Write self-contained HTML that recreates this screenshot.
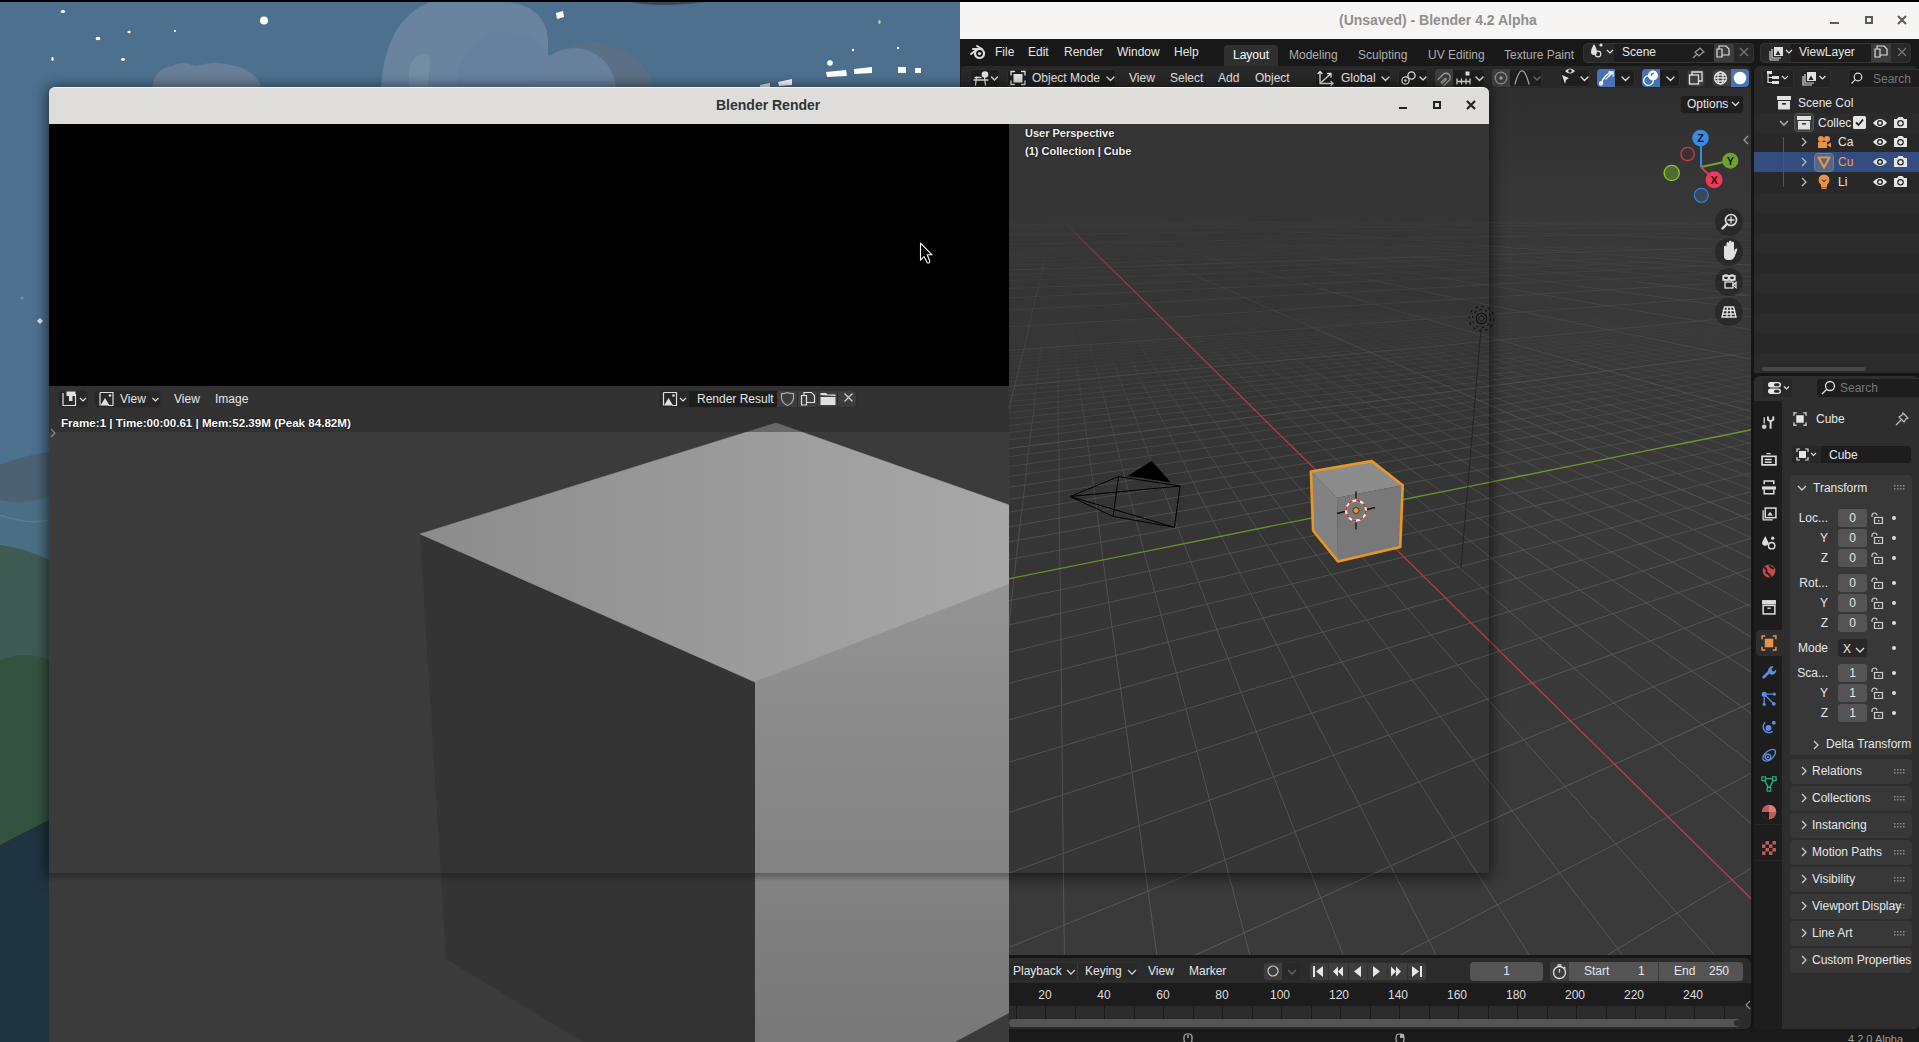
<!DOCTYPE html>
<html><head><meta charset="utf-8">
<style>
*{margin:0;padding:0;box-sizing:border-box}
html,body{width:1919px;height:1042px;overflow:hidden;background:#000;font-family:"Liberation Sans",sans-serif}
.a{position:absolute}
.hb{background:#1e1e1e;border:1px solid #2e2e2e;border-radius:4px}
.t{position:absolute;white-space:nowrap;color:#e6e6e6;font-size:12px;line-height:14px}
</style></head><body>
<!-- desktop wallpaper -->
<svg class="a" style="left:0;top:2px" width="960" height="1040" viewBox="0 2 960 1040">
  <rect x="0" y="2" width="960" height="1040" fill="#4d708f"/>
  <!-- clouds -->
  <path d="M548 88V40Q546 5 505 2H430Q385 20 381 88Z" fill="#6a84a0"/>
  <circle cx="507" cy="82" r="50" fill="#6780a0" opacity=".9"/>
  <path d="M546 88Q552 45 590 42Q640 45 655 88Z" fill="#5b7086"/>
  <circle cx="574" cy="90" r="42" fill="#67809c"/>
  <path d="M410 88Q405 60 420 55Q428 52 430 60L428 88Z" fill="#7b92a8" opacity=".6"/>
  <path d="M152 88Q155 68 172 66Q182 60 195 66Q215 60 235 66Q255 70 262 88Z" fill="#697f98"/>
  <path d="M630 2Q660 8 705 2Z" fill="#38495a"/>
  <!-- stars -->
  <g fill="#fff">
    <ellipse cx="63" cy="11.5" rx="2.2" ry="1.6"/><ellipse cx="98" cy="38.5" rx="2.3" ry="1.7"/><ellipse cx="129" cy="32" rx="1.6" ry="1.2"/>
    <circle cx="175" cy="31" r="1.1"/><circle cx="264" cy="20.5" r="4"/><ellipse cx="52.5" cy="59" rx="1.2" ry="2"/><ellipse cx="123" cy="59.5" rx="2" ry="1.4"/>
    <path d="M556 13L563 11L564 17L557 19Z"/><circle cx="853" cy="50" r="1.2"/><circle cx="898" cy="48" r="1.2"/>
    <path d="M826 72L846 70L847 76L827 77Z"/><path d="M854 69L872 67L872 73L854 74Z"/><path d="M898 67L906 67L906 73L898 73Z"/><path d="M915 68L921 68L921 73L915 73Z"/>
    <path d="M760 85L770 83L770 88L760 88Z" opacity=".8"/><path d="M778 82L792 79L792 85L779 86Z"/>
    <circle cx="830" cy="63" r="2.8"/>
  </g>
  <ellipse cx="879.5" cy="22" rx="1.2" ry="2" fill="#e6d060"/>
  <path d="M40 318L43 321L40 324L37 321Z" fill="#dfe6ee"/><circle cx="22" cy="298" r="1.5" fill="#7890a8"/>
  <!-- left strip landscape -->
  <path d="M0 465Q25 455 49 452V1042H0Z" fill="#4c6273"/>
  <path d="M0 500Q20 505 49 497V1042H0Z" fill="#4a6f84"/>
  <path d="M0 515Q25 525 49 520" fill="none" stroke="#5a7c8e" stroke-width="1.5"/>
  <path d="M0 545Q25 548 49 560V1042H0Z" fill="#3e5b54"/>
  <path d="M0 660Q25 650 49 660V1042H0Z" fill="#34533f"/>
  <path d="M0 845Q25 832 49 820V1042H0Z" fill="#1f3340"/>
  <!-- shadow of render window -->
  <defs><linearGradient id="shtop" x1="0" y1="0" x2="0" y2="1"><stop offset="0" stop-color="#000" stop-opacity="0"/><stop offset="1" stop-color="#000" stop-opacity=".35"/></linearGradient>
  <linearGradient id="shleft" x1="0" y1="0" x2="1" y2="0"><stop offset="0" stop-color="#000" stop-opacity="0"/><stop offset="1" stop-color="#000" stop-opacity=".35"/></linearGradient></defs>
</svg>
<!-- main blender window -->
<div class="a" id="main" style="left:960px;top:2px;width:959px;height:1040px;background:#161616">
  <div class="a" style="left:0;top:0;width:959px;height:37px;background:#f6f5f4"></div>
  <div class="a" style="left:0;top:37px;width:959px;height:27px;background:#181818"></div>
  <div class="a" style="left:0;top:64px;width:791px;height:22px;background:#1d1d1d"></div>

  <!-- viewport -->
  <div class="a" style="left:1px;top:86px;width:790px;height:867px;background:linear-gradient(#2f2f2f 0,#373737 110px,#393939 400px,#3a3a3a)"></div>
  <div class="a" style="left:49px;top:122px;width:480px;height:749px;background:#383838"></div>
  <svg class="a" id="grid" style="left:1px;top:86px" width="790" height="867" viewBox="961 88 790 867"><g id="gridg"><path d="M947 224L988 223L1027 223L1065 223L1101 223L1135 223L1169 222L1201 222L1231 222L1261 222L1289 222L1317 222L1343 222M929 225L977 225L1023 225L1066 224L1108 224L1148 224L1186 224L1222 224L1256 223L1290 223L1321 223L1352 223L1381 223L1409 222L1436 222L1462 222L1487 222L1512 222M961 227L1016 227L1068 226L1118 226L1164 226L1208 225L1250 225L1290 225L1328 225L1364 224L1398 224L1431 224L1462 224L1492 223L1520 223L1548 223L1574 223L1599 223L1623 223L1647 222M936 230L1006 230L1071 229L1132 229L1188 228L1241 228L1290 227L1337 227L1381 227L1422 226L1461 226L1498 226L1533 225L1566 225L1597 225L1627 224L1656 224L1683 224L1709 224L1734 224L1757 223M1226 232L1291 232L1352 231L1408 230L1460 230L1508 229L1553 229L1594 228L1634 228L1671 227L1705 227L1738 226L1768 226M1646 234L1698 233L1745 232L1789 231M1160 222L1164 222L1169 222L1174 223L1179 223L1186 224L1192 224L1200 225L1208 225L1218 226L1229 227L1241 228L1255 229L1272 230L1291 232M1253 222L1261 222L1270 222L1279 223L1290 223L1301 224L1314 224L1328 225L1343 225L1361 226L1381 227L1403 227L1429 228L1460 230L1495 231L1538 233M1343 222L1355 222L1367 222L1381 223L1396 223L1412 223L1431 224L1451 224L1473 225L1498 226L1526 226L1558 227L1594 228L1637 229L1686 230L1745 232L1816 234M1446 222L1462 222L1480 222L1499 223L1520 223L1543 224L1569 224L1597 225L1629 225L1665 226L1705 227L1751 228M1555 222L1576 222L1599 223L1624 223L1652 224L1683 224L1717 225L1755 225M1696 223L1725 223L1757 223" stroke="#606060" stroke-width="1" stroke-opacity="0.10" fill="none"/><path d="M895 236L990 235L1076 234L1154 233L1226 232M958 245L1085 243L1196 241L1293 239L1380 238L1457 237L1526 236L1589 235L1646 234M867 274L1109 267L1298 261L1450 256L1574 252L1677 249L1765 247M1291 232L1315 233L1344 235L1380 238L1426 241L1488 246L1574 252L1703 262L1919 278M1538 233L1589 235L1653 237L1734 240L1841 244" stroke="#606060" stroke-width="1" stroke-opacity="0.20" fill="none"/><path d="M1026 249L1090 247M952 252L1024 251L1092 249L1154 248L1212 247L1266 246L1317 245M945 254L1023 253L1094 251L1159 250L1220 249L1277 247L1330 246L1379 245M938 257L1020 255L1096 254L1166 252L1230 251L1289 249L1344 248L1396 247L1444 246M929 260L1018 258L1099 256L1172 254L1240 253L1303 251L1360 250L1414 248L1464 247L1510 246M919 264L1015 261L1102 259L1180 257L1252 255L1318 253L1378 252L1434 250L1486 249L1534 248L1579 247M1266 258L1335 256L1399 254L1457 253L1511 251L1561 250L1607 248L1650 247M1422 257L1483 255L1539 253L1591 252L1638 250L1682 249M1512 258L1571 256L1624 254L1673 253L1719 251L1760 250M1607 259L1662 257L1713 255L1759 253M1649 262L1706 260L1758 258M1002 250L997 253L992 257L984 262M1048 249L1047 252L1046 256L1045 261M1132 247L1138 250L1146 254L1155 258M1171 247L1180 249L1191 253L1205 256M1208 246L1220 249L1235 252L1252 255L1273 260M1244 245L1259 248L1276 251L1297 254L1322 258M1278 245L1295 247L1315 250L1339 253L1367 257M1311 244L1330 246L1352 249L1378 252L1410 256M1363 245L1387 248L1416 251L1450 254L1492 259M1395 245L1421 247L1452 250L1489 253L1532 257M1425 244L1453 246L1486 249L1525 252L1571 256L1627 261M1484 246L1518 248L1559 251L1607 255L1665 259L1737 264M1513 245L1549 247L1591 250L1641 254L1701 258L1775 263M1579 247L1622 249L1673 253L1735 256L1810 261M1651 249L1704 252L1766 255M1679 248L1733 251L1796 254" stroke="#606060" stroke-width="1" stroke-opacity="0.10" fill="none"/><path d="M908 268L1012 265L1105 263L1189 260L1266 258M894 273L1008 270L1109 267L1200 264L1281 261L1355 259L1422 257M877 279L1003 275L1114 271L1212 268L1299 265L1378 262L1448 260L1512 258M857 286L998 281L1120 277L1226 273L1320 269L1404 266L1479 264L1546 261L1607 259M832 296L991 289M1127 284L1244 279L1345 275L1435 271L1514 268L1585 265L1649 262M1376 281L1472 277L1557 273L1631 269L1697 266L1756 264M1518 283L1607 279L1686 275L1754 271M1669 286L1752 281M1747 295L1833 289M984 262L975 268L963 276L947 287M1045 261L1043 266L1042 274L1039 283M1155 258L1166 263L1180 269L1199 277M1205 256L1221 261L1242 267L1268 274L1304 284M1273 260L1299 265L1332 272L1376 281M1322 258L1352 263L1391 270L1442 278M1367 257L1402 262L1445 268L1502 275L1577 286M1410 256L1448 260L1496 266L1557 273L1637 282M1492 259L1543 264L1607 270L1691 279L1806 291M1532 257L1586 262L1654 268L1741 276L1858 287M1627 261L1697 266L1787 274M1737 264L1829 271" stroke="#606060" stroke-width="1" stroke-opacity="0.20" fill="none"/><path d="M991 289L1127 284M799 308L982 299L1135 292L1265 286L1376 281M754 324L971 312L1146 303L1291 295L1413 289L1518 283M955 330L1161 318L1326 307L1461 299L1574 292L1669 286M933 356L1181 338L1372 323L1523 312L1646 303L1747 295M1438 346L1608 330L1741 317L1848 307M1730 355L1873 337M1039 283L1036 297L1031 317L1024 349M1199 277L1224 288L1259 304L1314 328M1304 284L1353 298L1426 319L1548 354M1376 281L1436 294L1523 312L1663 341M1442 278L1510 289L1608 306L1759 331M1577 286L1682 300L1841 322M1637 282L1747 295L1910 314" stroke="#606060" stroke-width="1" stroke-opacity="0.30" fill="none"/><path d="M897 397L1211 367L1438 346M833 471L1261 416L1537 380L1730 355M1024 349L1008 413L966 587L308 3326M-98 1543L1615 764L2062 561M1314 328L1408 369L1610 458L2360 789M1548 354L1789 422M1663 341L1923 395" stroke="#606060" stroke-width="1" stroke-opacity="0.40" fill="none"/><path d="M1000 327L1043 325L1084 322L1123 320M953 332L999 330L1043 327L1085 324L1125 322L1163 319L1199 317L1234 315M951 335L998 332L1043 329L1085 326L1126 323L1164 321L1201 319L1237 316L1271 314M949 337L997 334L1043 331L1086 328L1127 325L1166 323L1204 320L1240 318L1274 316L1307 314M947 339L996 336L1042 333L1086 330L1128 327L1168 325L1206 322L1243 320L1277 317L1311 315L1343 313M945 342L995 339L1042 335L1087 332L1130 329L1170 327L1209 324L1246 321L1281 319L1315 317L1347 315L1378 313M943 345L994 341L1042 338L1088 335L1131 332L1172 329L1212 326L1249 323L1285 321L1319 318L1352 316L1383 314M940 347L992 344L1042 340L1088 337L1132 334L1174 331L1214 328L1252 325L1289 323L1324 320L1357 318L1388 316L1419 314M938 350L991 346L1041 343L1089 339L1134 336L1177 333L1217 330L1256 327L1293 325L1328 322L1362 320L1394 317L1425 315M935 353L990 349L1041 345L1089 342L1135 338L1179 335L1220 332L1260 329L1297 327L1333 324L1367 321L1399 319L1430 317L1460 315M933 356L988 352M1181 338L1223 334L1263 331L1301 329L1338 326L1372 323L1405 321L1437 318L1467 316M1267 334L1306 331L1343 328L1378 325L1411 323L1443 320L1473 318L1503 316M1311 333L1348 330L1383 327L1417 324L1450 322L1480 319L1510 317M1353 332L1389 329L1424 326L1456 324L1488 321L1517 319L1546 317M1359 334L1395 331L1430 328L1463 326L1495 323L1525 321L1554 318M1402 333L1437 330L1471 328L1503 325L1533 322L1562 320M1444 333L1478 330L1510 327L1541 324L1571 322L1599 319M1451 335L1486 332L1519 329L1550 326L1580 324L1608 321M1494 334L1527 331L1559 328L1589 326L1617 323M1502 336L1536 333L1568 330L1598 328L1627 325L1655 322M1511 339L1545 336L1577 333L1608 330L1637 327L1665 324M1555 338L1587 335L1618 332L1648 329L1676 326M1565 340L1598 337L1629 334L1659 331L1687 328M1608 340L1640 336L1670 333L1698 330L1726 327M1619 342L1651 339L1682 335L1710 332L1738 329M1631 345L1663 341L1694 338L1723 335L1750 332M1643 347L1676 344L1706 340L1736 337L1763 334M969 331L964 338L958 346M1688 346L1720 343L1749 339L1777 336M984 330L980 337L975 345L970 353M1702 349L1733 345L1763 342M999 330L996 336L992 344L988 352M1716 352L1748 348L1777 344M1014 329L1012 335L1009 342L1006 351M1730 355L1762 351M1029 328L1027 334L1025 341L1024 349M1043 327L1042 333L1042 340L1041 348M1057 326L1057 332L1057 339L1057 347M1071 325L1072 331L1073 338L1074 346M1085 324L1086 330L1088 337L1090 344M1098 323L1101 329L1103 336L1106 343M1112 322L1115 328L1118 335L1122 342M1125 322L1128 327L1132 334L1137 341M1138 321L1142 326L1147 333L1152 340M1150 320L1155 326L1161 332L1167 339M1175 318L1181 324L1188 330L1196 336M1187 318L1194 323L1201 329L1210 335M1199 317L1206 322L1214 328L1223 334M1211 316L1219 321L1227 327L1237 333M1222 315L1231 321L1240 326L1250 332M1234 315L1243 320L1252 325L1263 331M1245 314L1254 319L1265 324L1276 330L1289 337M1256 313L1266 318L1277 324L1289 329L1302 336M1267 313L1277 317L1289 323L1301 329L1315 335M1278 312L1289 317L1301 322L1314 328L1328 334M1300 316L1312 321L1326 327L1341 333M1311 315L1324 320L1338 326L1353 332M1322 314L1335 319L1349 325L1365 331M1332 314L1346 319L1361 324L1377 330M1343 313L1357 318L1372 323L1389 329L1408 336M1353 312L1367 317L1383 322L1401 328L1421 335M1363 312L1378 316L1394 322L1412 327L1432 334M1388 316L1405 321L1424 326L1444 333M1399 315L1416 320L1435 326L1456 332M1409 314L1426 319L1446 325L1467 331L1491 337M1419 314L1437 318L1456 324L1478 330L1502 336M1429 313L1447 318L1467 323L1489 329L1514 335M1438 312L1457 317L1477 322L1500 328L1525 334L1553 342M1467 316L1488 321L1510 327L1536 333L1565 340M1477 315L1498 320L1521 326L1547 332L1576 339M1486 315L1508 320L1531 325L1557 331L1587 338M1496 314L1517 319L1541 324L1568 330L1598 337L1631 345M1527 318L1551 323L1578 329L1608 336L1642 343M1536 317L1561 323L1588 328L1619 335L1653 342L1691 351M1546 317L1571 322L1598 328L1629 334L1663 341L1702 349M1580 321L1608 327L1639 333L1674 340L1713 348L1757 357M1590 320L1618 326L1649 332L1684 339L1723 347L1767 356M1599 319L1627 325L1659 331L1694 338L1733 345L1778 354M1637 324L1668 330L1704 337L1743 344L1788 353M1646 323L1678 329L1713 336L1753 343M1655 322L1687 328L1723 335L1763 342M1696 327L1732 334L1772 341M1705 326L1741 333L1782 340M1750 332L1791 338" stroke="#575757" stroke-width="1" stroke-opacity="0.10" fill="none"/><path d="M988 352L1041 348L1090 344L1137 341L1181 338M930 359L987 355L1040 351L1091 347L1139 343L1184 340L1227 337L1267 334M927 363L985 358L1040 354L1092 350L1140 346L1186 343L1230 339L1271 336L1311 333M924 366L984 362L1040 357L1092 353L1142 349L1189 345L1233 342L1275 338L1315 335L1353 332M921 370L982 365L1039 360L1093 356L1144 352L1192 348L1237 344L1280 341L1320 337L1359 334M917 374L980 369L1039 364L1094 359L1146 355L1195 351L1241 347L1284 343L1326 340L1365 337L1402 333M914 378L978 373L1038 367L1095 363L1148 358L1198 354L1245 350L1289 346L1331 342L1371 339L1408 336L1444 333M1249 353L1294 349L1337 345L1377 341L1415 338L1451 335M1299 352L1343 348L1384 344L1422 341L1459 337L1494 334M1349 351L1390 347L1430 343L1467 340L1502 336M1355 354L1398 350L1438 346L1475 342L1511 339M1405 353L1446 349L1484 345L1520 341L1555 338M1454 351L1493 348L1530 344L1565 340M1463 354L1502 350L1540 347L1575 343L1608 340M1512 353L1550 349L1586 346L1619 342M1522 357L1561 352L1597 348L1631 345M1533 360L1572 355L1608 351L1643 347M1584 359L1621 354L1655 350L1688 346M970 353L964 363L957 374M1596 362L1633 357L1669 353L1702 349M988 352L984 362L978 373M1609 365L1647 361L1682 356L1716 352M1006 351L1003 360L999 371M1661 364L1697 360L1730 355M1024 349L1021 359L1019 369M1675 368L1712 363L1746 358L1778 354M1041 348L1040 357L1038 367M1690 372L1727 367L1762 362M1057 347L1058 356L1058 366M1707 376L1744 370L1779 365M1074 346L1075 354L1076 364M1090 344L1092 353L1095 363M1106 343L1109 352L1113 361M1122 342L1126 350L1131 360M1137 341L1142 349L1148 358M1152 340L1158 348L1165 357M1167 339L1174 346L1181 355M1196 336L1204 344L1214 352M1210 335L1219 343L1229 351M1223 334L1233 342L1245 350M1237 333L1248 340L1260 348L1274 358M1250 332L1262 339L1275 347L1289 356M1263 331L1275 338L1289 346L1305 355M1289 337L1303 345L1320 353M1302 336L1317 344L1334 352M1315 335L1331 342L1349 351M1328 334L1345 341L1363 349M1341 333L1358 340L1377 348M1353 332L1371 339L1390 347L1413 356M1365 331L1384 338L1404 346L1427 354M1377 330L1396 337L1417 344L1441 353M1408 336L1430 343L1454 351M1421 335L1442 342L1467 350M1432 334L1455 341L1480 349L1509 358M1444 333L1467 340L1493 348L1522 357M1456 332L1479 339L1505 346L1535 355M1491 337L1518 345L1548 354L1583 364M1502 336L1530 344L1561 352L1596 362M1514 335L1542 343L1573 351L1609 360M1553 342L1585 350L1621 359L1662 370M1565 340L1597 348L1633 357L1675 368M1576 339L1608 347L1645 356L1688 366L1736 378M1587 338L1620 346L1657 355L1700 365L1749 376M1631 345L1669 353L1712 363L1761 374M1642 343L1680 352L1723 361L1773 372M1691 351L1735 360L1785 371M1702 349L1746 358L1796 369" stroke="#575757" stroke-width="1" stroke-opacity="0.20" fill="none"/><path d="M910 383L976 377L1038 371L1096 366L1150 361L1201 357L1249 353M906 387L974 381L1038 375L1097 370L1152 365L1204 360L1253 356L1299 352M902 392L972 385L1037 379L1098 374L1155 369L1208 364L1258 359L1305 355L1349 351M897 397L970 390L1037 384L1099 378L1157 372L1211 367L1262 362L1310 358L1355 354M893 402L967 395L1036 388L1100 382L1160 376L1215 371L1267 366L1316 361L1362 357L1405 353M888 408L964 400M1219 375L1272 370L1322 365L1369 360L1413 356L1454 351M1278 374L1329 368L1376 363L1421 359L1463 354M1335 372L1384 367L1429 362L1472 358L1512 353M1392 371L1438 366L1482 361L1522 357M1448 369L1492 364L1533 360M1457 373L1502 368L1544 363L1584 359M1513 372L1556 367L1596 362M978 373L972 385L964 400M1525 376L1568 371L1609 365M999 371L994 383L989 398M1537 380L1581 374L1622 369L1661 364M1019 369L1016 381L1012 396M1595 379L1636 373L1675 368M1038 367L1037 379L1035 393M1609 383L1651 377L1690 372M1058 366L1058 377L1058 391M1624 388L1667 381L1707 376M1076 364L1078 376L1080 389M1683 386L1724 380L1761 374M1095 363L1098 374L1101 387M1701 391L1741 384L1779 378M1113 361L1117 372L1122 385M1719 396L1760 389M1131 360L1136 370L1142 383M1739 401L1780 394M1148 358L1155 369L1162 381M1165 357L1173 367L1182 379M1181 355L1190 365L1201 377M1214 352L1225 362L1237 373M1229 351L1241 361L1255 371M1245 350L1258 359L1272 370M1274 358L1289 368M1289 356L1306 366M1305 355L1322 365L1343 376M1320 353L1338 363L1359 374M1334 352L1354 362L1376 373M1349 351L1369 360L1392 371M1363 349L1384 358L1408 369M1377 348L1398 357L1423 367M1413 356L1438 366L1468 377M1427 354L1453 364L1483 375M1441 353L1467 363L1498 374M1454 351L1482 361L1513 372M1467 350L1495 359L1528 370L1565 383M1509 358L1542 368L1580 381M1522 357L1556 367L1595 379M1535 355L1569 365L1609 377L1655 390M1583 364L1623 375L1669 388M1596 362L1636 373L1683 386L1739 401M1609 360L1649 371L1697 384L1753 399M1662 370L1710 382L1767 396M1675 368L1724 380L1780 394M1736 378L1793 392M1749 376L1806 389" stroke="#575757" stroke-width="1" stroke-opacity="0.30" fill="none"/><path d="M964 400L1035 393L1101 387L1162 381L1219 375M882 414L962 406L1035 399L1102 392L1165 385L1224 379L1278 374M959 412L1034 404L1104 397L1168 390L1228 384L1284 378L1335 372M956 418L1034 410L1105 402L1171 395L1233 388L1290 382L1343 376L1392 371M952 425L1033 416M1175 400L1238 393L1296 386L1350 380L1400 375L1448 369M1303 391L1358 385L1409 379L1457 373M1366 390L1419 383L1468 377L1513 372M964 400L956 418M1375 395L1429 388L1478 382L1525 376M989 398L982 416M1439 393L1490 386L1537 380M1012 396L1008 413M1450 398L1502 391L1550 385L1595 379M1035 393L1034 410M1515 396L1564 389L1609 383M1058 391L1058 407M1528 401L1578 394L1624 388M1080 389L1082 405M1593 399L1640 392L1683 386M1101 387L1105 402M1609 405L1657 398L1701 391M1122 385L1128 400M1626 411L1675 403L1719 396M1142 383L1150 397M1645 417L1693 409L1739 401M1162 381L1171 395M1714 415L1759 407M1182 379L1192 393M1735 421L1781 413M1201 377L1213 390M1237 373L1252 386L1269 401M1255 371L1271 384L1290 399M1272 370L1290 382L1310 396M1289 368L1308 380L1329 394M1306 366L1325 378L1348 392M1343 376L1366 390M1359 374L1384 387M1376 373L1402 385L1432 400M1392 371L1419 383L1450 398M1408 369L1435 381L1468 396M1423 367L1452 379L1485 393M1468 377L1502 391L1543 407M1483 375L1518 389L1560 404M1498 374L1534 387L1577 402M1513 372L1550 385L1593 399M1565 383L1609 397L1661 414M1580 381L1625 395L1678 411M1595 379L1640 392L1693 409L1758 428M1655 390L1709 406L1774 425M1669 388L1724 404L1789 422M1739 401L1804 419" stroke="#575757" stroke-width="1" stroke-opacity="0.40" fill="none"/><path d="M1033 416L1107 408L1175 400M949 432L1032 423L1108 414L1178 406L1243 398L1303 391M945 440L1031 430L1110 420L1182 412L1248 404L1310 396L1366 390M941 449L1030 437L1112 427L1186 418L1254 410L1317 402L1375 395M982 416L975 437L965 463M936 457L1029 446M1191 425L1261 416L1325 407L1384 400L1439 393M1008 413L1003 433L997 458M1267 422L1333 413L1394 405L1450 398M1034 410L1031 430L1028 454M1342 420L1405 411L1462 403L1515 396M1058 407L1058 427L1059 450M1416 418L1474 409L1528 401M1082 405L1085 423L1088 446M1428 424L1488 415L1543 407L1593 399M1105 402L1110 420L1116 443M1502 422L1558 413L1609 405M1128 400L1135 417L1143 439M1517 429L1574 420L1626 411M1150 397L1159 414L1170 435M1591 426L1645 417M1171 395L1182 412L1195 432M1610 434L1664 424L1714 415M1192 393L1205 409L1220 429M1629 442L1685 431L1735 421M1213 390L1227 406L1244 425M1731 447L1782 436M1269 401L1290 419M1290 399L1312 416M1310 396L1333 413M1329 394L1354 411M1348 392L1375 408L1407 427M1366 390L1394 405L1428 424M1384 387L1413 403L1448 421M1432 400L1468 418M1450 398L1488 415M1468 396L1506 412L1553 433M1485 393L1525 410L1572 430M1543 407L1591 426M1560 404L1610 423L1670 446M1577 402L1627 420L1689 442M1593 399L1645 417L1707 439L1784 465M1661 414L1724 435L1802 461M1678 411L1741 432L1820 457" stroke="#575757" stroke-width="1" stroke-opacity="0.50" fill="none"/><path d="M965 463L953 496M1029 446L1114 435L1191 425M997 458L990 490M932 467L1028 454L1116 443L1195 432L1267 422M1028 454L1025 485M927 478L1027 464L1118 451L1200 440L1275 429L1342 420M1059 450L1059 480M921 489L1026 474L1120 460L1205 448L1282 437L1352 427L1416 418M1088 446L1092 475M1211 457L1290 445L1362 434L1428 424M1116 443L1123 470M1299 454L1373 442L1440 431L1502 422M1143 439L1153 466M1385 451L1454 439L1517 429M1170 435L1183 461M1469 447L1533 436L1591 426M1195 432L1211 457M1484 456L1550 444L1610 434M1220 429L1238 453M1569 453L1629 442M1244 425L1265 449M1610 472L1674 459L1731 447M1290 419L1315 441M1634 483L1698 469L1756 456M1312 416L1339 438M1725 479L1784 465M1333 413L1362 434L1398 460M1354 411L1385 431L1422 455M1407 427L1446 451M1428 424L1469 447M1448 421L1491 444M1468 418L1512 440L1566 467M1488 415L1533 436L1589 462M1553 433L1610 458L1682 490M1572 430L1631 454L1704 485M1591 426L1651 450L1725 479L1821 517M1670 446L1745 475L1842 511M1689 442L1765 470" stroke="#575757" stroke-width="1" stroke-opacity="0.60" fill="none"/><path d="M990 490L980 532M1025 485L1020 525M1059 480L1059 518M1092 475L1097 511M915 501L1025 485L1123 470L1211 457M1123 470L1132 505M908 515L1024 497L1126 481L1217 467L1299 454M1153 466L1167 499M901 530L1022 510L1129 493L1224 477L1309 463L1385 451M1183 461L1199 494M893 546L1020 525M1132 505L1231 488L1319 473L1398 460L1469 447M1211 457L1231 488M1330 484L1411 469L1484 456M1238 453L1262 483M1426 480L1501 466L1569 453M1265 449L1291 478M1540 488L1610 472M1315 441L1346 468L1386 503M1561 500L1634 483M1339 438L1372 464L1415 497M1585 513L1659 495L1725 479M1398 460L1442 492M1687 508L1754 491M1422 455L1469 486M1718 523L1786 504M1446 451L1495 481M1469 447L1520 476L1585 513M1491 444L1543 471L1611 507M1566 467L1636 501L1726 546M1589 462L1659 495L1752 538M1682 490L1776 531M1704 485L1799 524" stroke="#575757" stroke-width="1" stroke-opacity="0.70" fill="none"/><path d="M980 532L966 587M1020 525L1014 578M1059 518L1060 569M1097 511L1103 560M1132 505L1144 552M1167 499L1184 544M1199 494L1221 536M1020 525L1132 505M1231 488L1257 529M884 565L1019 540L1136 519L1239 501L1330 484M1262 483L1291 522M874 585L1017 558L1140 535L1248 514L1342 496L1426 480M1291 478L1324 516M1268 545L1370 524L1460 504L1540 488M1386 503L1438 549M1386 539L1479 518L1561 500M1415 497L1470 541M1501 534L1585 513M1442 492L1501 534M1524 550L1611 528L1687 508M1469 486L1530 526L1612 580M1550 569L1640 544L1718 523M1495 481L1558 520L1643 571M1672 562L1752 538M1585 513L1672 562L1793 631M1708 583L1789 556M1611 507L1700 554L1823 619M1748 605L1830 575M1726 546L1851 607" stroke="#575757" stroke-width="1" stroke-opacity="0.80" fill="none"/><path d="M966 587L947 667M1014 578L1006 653M1060 569L1061 640M1103 560L1112 627M1144 552L1161 615M1184 544L1207 604M1221 536L1251 594M1257 529L1292 584M1291 522L1331 574L1388 648M1324 516L1369 565L1431 635M850 634L1012 600L1149 571L1268 545M1438 549L1509 611M835 664L1009 625L1155 592L1279 564L1386 539M1470 541L1545 601L1654 687M818 698L1006 653L1161 615L1292 584L1404 557L1501 534L1580 590L1692 671M799 738L1002 685M1307 607L1424 576L1524 550M1612 580L1728 657L1905 774M1446 598L1550 569M1643 571L1761 643M1471 623L1580 590L1672 562M1500 651L1612 614L1708 583M1650 641L1748 605M1692 671L1793 631M1742 707L1845 660" stroke="#575757" stroke-width="1" stroke-opacity="0.90" fill="none"/><path d="M1006 653L993 767L970 963M1061 640L1062 747L1064 925L1068 1284M1112 627L1126 727L1148 891L1192 1208M1161 615L1186 709L1225 860L1299 1143M1207 604L1241 692L1295 832L1394 1085M1251 594L1293 677L1360 806L1477 1035M1292 584L1342 662L1419 782L1551 989M1388 648L1473 760L1618 949L1915 1339M1431 635L1523 739L1677 913L1983 1256M1509 611L1614 703L1781 850M1654 687L1826 822M1692 671L1867 797M1002 685L1168 642L1307 607M775 785L998 723L1176 673L1323 632L1446 598M748 841L993 767L1186 709L1342 662L1471 623M714 910L986 820L1197 751L1364 696L1500 651M672 995L979 884L1210 800L1389 735L1532 683L1650 641M970 963L1225 860L1419 782L1570 721L1692 671M959 1063L1244 933L1454 837L1615 764L1742 707M1268 1024L1497 905L1668 817L1799 748M1551 989L1732 880L1867 797" stroke="#575757" stroke-width="1" stroke-opacity="1.00" fill="none"/><path d="M1067.9 225.9L1067.9 225.9L1068.0 226.0L1068.0 226.0L1068.1 226.1L1068.1 226.1L1068.2 226.2L1068.2 226.2L1068.3 226.2L1068.3 226.3L1068.4 226.3L1068.4 226.4L1068.5 226.4L1068.5 226.5L1068.5 226.5L1068.6 226.6L1068.6 226.6L1068.7 226.7L1068.7 226.7L1068.8 226.8L1068.8 226.8L1068.9 226.9L1068.9 226.9L1069.0 227.0L1069.1 227.0L1069.1 227.1L1069.2 227.1L1069.2 227.2L1069.3 227.2L1069.3 227.3L1069.4 227.3L1069.4 227.4L1069.5 227.4L1069.5 227.5L1069.6 227.6L1069.7 227.6L1069.7 227.7L1069.8 227.7L1069.8 227.8L1069.9 227.8L1070.0 227.9L1070.0 228.0L1070.1 228.0L1070.1 228.1L1070.2 228.1L1070.3 228.2L1070.3 228.3L1070.4 228.3L1070.5 228.4L1070.5 228.5L1070.6 228.5L1070.6 228.6L1070.7 228.7L1070.8 228.7L1070.8 228.8L1070.9 228.9L1071.0 228.9L1071.1 229.0L1071.1 229.1L1071.2 229.1" stroke="#c03a4f" stroke-width="1.4" stroke-opacity="0.10" fill="none"/><path d="M1071.2 229.1L1071.3 229.2L1071.3 229.3L1071.4 229.3L1071.5 229.4L1071.6 229.5L1071.6 229.6L1071.7 229.6L1071.8 229.7L1071.9 229.8L1071.9 229.9L1072.0 229.9L1072.1 230.0L1072.2 230.1L1072.3 230.2L1072.3 230.3L1072.4 230.3L1072.5 230.4L1072.6 230.5L1072.7 230.6L1072.8 230.7L1072.9 230.8L1072.9 230.9L1073.0 230.9L1073.1 231.0L1073.2 231.1L1073.3 231.2L1073.4 231.3L1073.5 231.4L1073.6 231.5L1073.7 231.6L1073.8 231.7L1073.9 231.8L1074.0 231.9L1074.1 232.0L1074.2 232.1L1074.3 232.2L1074.4 232.3L1074.5 232.4" stroke="#c03a4f" stroke-width="1.4" stroke-opacity="0.19" fill="none"/><path d="M1074.5 232.4L1074.6 232.5L1074.7 232.6L1074.8 232.7L1074.9 232.8L1075.0 232.9L1075.2 233.0L1075.3 233.1L1075.4 233.3L1075.5 233.4L1075.6 233.5L1075.7 233.6L1075.9 233.7L1076.0 233.8L1076.1 234.0L1076.2 234.1L1076.4 234.2L1076.5 234.3L1076.6 234.5L1076.8 234.6L1076.9 234.7L1077.0 234.9L1077.2 235.0L1077.3 235.1L1077.4 235.3L1077.6 235.4L1077.7 235.6L1077.9 235.7L1078.0 235.9L1078.2 236.0L1078.3 236.2L1078.5 236.3" stroke="#c03a4f" stroke-width="1.4" stroke-opacity="0.28" fill="none"/><path d="M1078.5 236.3L1078.6 236.5L1078.8 236.6L1079.0 236.8L1079.1 236.9L1079.3 237.1L1079.5 237.3L1079.6 237.4L1079.8 237.6L1080.0 237.8L1080.2 238.0L1080.3 238.1L1080.5 238.3L1080.7 238.5L1080.9 238.7L1081.1 238.9L1081.3 239.1L1081.5 239.3L1081.7 239.5L1081.9 239.7L1082.1 239.9L1082.3 240.1L1082.5 240.3L1082.8 240.5L1083.0 240.7L1083.2 241.0L1083.4 241.2" stroke="#c03a4f" stroke-width="1.4" stroke-opacity="0.38" fill="none"/><path d="M1083.4 241.2L1083.7 241.4L1083.9 241.7L1084.2 241.9L1084.4 242.1L1084.7 242.4L1084.9 242.6L1085.2 242.9L1085.4 243.2L1085.7 243.4L1086.0 243.7L1086.3 244.0L1086.5 244.3L1086.8 244.5L1087.1 244.8L1087.4 245.1L1087.7 245.4L1088.1 245.7L1088.4 246.1L1088.7 246.4L1089.0 246.7L1089.4 247.0L1089.7 247.4L1090.1 247.7L1090.5 248.1" stroke="#c03a4f" stroke-width="1.4" stroke-opacity="0.47" fill="none"/><path d="M1090.5 248.1L1090.8 248.5L1091.2 248.8L1091.6 249.2L1092.0 249.6L1092.4 250.0L1092.8 250.4L1093.2 250.8L1093.7 251.3L1094.1 251.7L1094.6 252.1L1095.0 252.6L1095.5 253.1L1096.0 253.6L1096.5 254.0L1097.0 254.6L1097.5 255.1L1098.1 255.6L1098.6 256.2L1099.2 256.7L1099.8 257.3L1100.4 257.9" stroke="#c03a4f" stroke-width="1.4" stroke-opacity="0.57" fill="none"/><path d="M1100.4 257.9L1101.0 258.5L1101.6 259.1L1102.3 259.8L1103.0 260.4L1103.7 261.1L1104.4 261.8L1105.1 262.5L1105.9 263.3L1106.7 264.0L1107.5 264.8L1108.3 265.7L1109.2 266.5L1110.0 267.4L1111.0 268.3L1111.9 269.2L1112.9 270.2L1113.9 271.2L1115.0 272.2L1116.1 273.3" stroke="#c03a4f" stroke-width="1.4" stroke-opacity="0.66" fill="none"/><path d="M1116.1 273.3L1117.2 274.4L1118.4 275.6L1119.6 276.8L1120.9 278.1L1122.2 279.4L1123.6 280.7L1125.1 282.2L1126.6 283.7L1128.1 285.2L1129.8 286.8L1131.5 288.5L1133.3 290.3L1135.2 292.2L1137.2 294.1L1139.3 296.2L1141.5 298.4L1143.8 300.7L1146.3 303.1" stroke="#c03a4f" stroke-width="1.4" stroke-opacity="0.76" fill="none"/><path d="M1146.3 303.1L1148.9 305.6L1151.6 308.3L1154.5 311.2L1157.6 314.3L1160.9 317.5L1164.5 321.0L1168.2 324.7L1172.3 328.7L1176.6 332.9L1181.3 337.5L1186.3 342.5L1191.8 347.9L1197.8 353.8L1204.3 360.2L1211.4 367.2L1219.3 375.0L1228.0 383.5" stroke="#c03a4f" stroke-width="1.4" stroke-opacity="0.85" fill="none"/><path d="M1228.0 383.5L1237.7 393.1L1248.5 403.7L1260.7 415.7L1274.5 429.4L1290.4 445.0L1308.7 463.0L1330.2 484.2L1355.6 509.2L1386.2 539.4L1423.8 576.4L1471.1 623.0L1532.4 683.3L1614.8 764.4L1731.7 879.5L1910.4 1055.6" stroke="#c03a4f" stroke-width="1.4" stroke-opacity="0.95" fill="none"/><path d="M862.3 608.2L966.3 587.4L1059.8 568.6L1144.4 551.6L1221.2 536.2L1291.4 522.1L1355.6 509.2L1414.7 497.3L1469.2 486.4L1519.6 476.3L1566.5 466.9L1610.1 458.1L1650.7 449.9L1688.8 442.3L1724.4 435.2L1757.9 428.4" stroke="#6d9d2a" stroke-width="1.4" stroke-opacity="0.95" fill="none"/></g><polygon points="1310.9,471.5 1337.0,497.8 1402.7,485.2 1371.8,461.1" fill="#949494"/><polygon points="1310.9,471.5 1337.0,497.8 1338.0,561.5 1313.1,530.8" fill="#8a8a8a"/><polygon points="1337.0,497.8 1402.7,485.2 1400.3,547.0 1338.0,561.5" fill="#7f7f7f"/><polygon points="1371.8,461.1 1402.7,485.2 1400.3,547.0 1338.0,561.5 1313.1,530.8 1310.9,471.5" fill="none" stroke="#f5a02a" stroke-width="2.6" stroke-linejoin="round"/><path d="M1180.1,486.0 L1118.6,476.6 L1113.1,516.4 L1174.4,527.3 Z M1070.1,496.5 L1180.1,486.0 M1070.1,496.5 L1118.6,476.6 M1070.1,496.5 L1113.1,516.4 M1070.1,496.5 L1174.4,527.3" fill="none" stroke="#000" stroke-width="1"/><polygon points="1170.9,482.5 1127.9,476.0 1151.7,460.9" fill="#000"/><line x1="1481.0" y1="328.5" x2="1460.9" y2="568.8" stroke="#222" stroke-width="0.8"/><circle cx="1481.5" cy="318.5" r="12.3" fill="none" stroke="#111" stroke-width="1.1" stroke-dasharray="2.6 3.8"/><circle cx="1481.5" cy="318.5" r="9" fill="none" stroke="#111" stroke-width="1.1" stroke-dasharray="2.4 3.3"/><circle cx="1481.5" cy="318.5" r="5.3" fill="none" stroke="#111" stroke-width="1.1"/><path d="M1481.5 315.2L1484.8 318.5L1481.5 321.8L1478.2 318.5Z" fill="none" stroke="#111" stroke-width="1"/><path d="M1356 491.5V498.5M1356 522.5V529.5M1337 513.5L1345 511.5M1367 509.5L1375 507.5" stroke="#111" stroke-width="1.3"/><circle cx="1356" cy="510.5" r="10" fill="none" stroke="#fff" stroke-width="1.8"/><circle cx="1356" cy="510.5" r="10" fill="none" stroke="#e0262a" stroke-width="1.8" stroke-dasharray="3.9 3.95"/><circle cx="1356" cy="510.5" r="3" fill="#f5a02a" stroke="#222" stroke-width=".8"/></svg>
  <!-- viewport overlays -->
  <div class="t" style="left:65px;top:124px;color:#fff;font-weight:bold;font-size:11px;text-shadow:0 0 2px #000">User Perspective</div>
  <div class="t" style="left:65px;top:142px;color:#fff;font-weight:bold;font-size:11px;text-shadow:0 0 2px #000">(1) Collection | Cube</div>
  <div class="a hb" style="left:720px;top:93px;width:64px;height:19px;background:#1e1e1e"></div>
  <div class="t" style="left:727px;top:95px">Options</div>
  <svg class="a" style="left:771px;top:99px" width="9" height="6"><path d="M1 1L4.5 4.5L8 1" fill="none" stroke="#ddd" stroke-width="1.3"/></svg>
  <svg class="a" style="left:700px;top:125px" width="80" height="80" viewBox="1660 127 80 80">
    <circle cx="1687.6" cy="154" r="6.7" fill="#3d3033" stroke="#c43e50" stroke-width="1.2"/>
    <circle cx="1671.7" cy="173" r="7.6" fill="#4f6a33" stroke="#86c72b" stroke-width="1.4"/>
    <circle cx="1701.3" cy="195.3" r="7" fill="#364859" stroke="#3b82d6" stroke-width="1.2"/>
    <path d="M1701 167V138" stroke="#3b8ae6" stroke-width="2"/>
    <path d="M1701 167L1730 160.7" stroke="#6ea22c" stroke-width="2"/>
    <path d="M1701 167L1714 179.7" stroke="#e8354f" stroke-width="2"/>
    <circle cx="1700.5" cy="138.1" r="8.3" fill="#3b8ae6"/>
    <circle cx="1730.3" cy="160.7" r="8" fill="#6ea22c"/>
    <circle cx="1714.1" cy="179.7" r="8.5" fill="#f0385a"/>
    <g font-family="Liberation Sans" font-weight="bold" font-size="11" text-anchor="middle" fill="#10151c">
      <text x="1700.5" y="142">Z</text><text x="1730.3" y="164.7">Y</text><text x="1714.1" y="183.7" fill="#3a0a10">X</text>
    </g>
  </svg>
  <!-- nav buttons -->
  <div class="a" style="left:755px;top:206px;width:28px;height:28px;border-radius:14px;background:rgba(30,30,30,.55)"></div>
  <div class="a" style="left:755px;top:236px;width:28px;height:28px;border-radius:14px;background:rgba(30,30,30,.55)"></div>
  <div class="a" style="left:755px;top:266px;width:28px;height:28px;border-radius:14px;background:rgba(30,30,30,.55)"></div>
  <div class="a" style="left:755px;top:296px;width:28px;height:28px;border-radius:14px;background:rgba(30,30,30,.55)"></div>
  <svg class="a" style="left:755px;top:206px" width="28" height="120" viewBox="0 0 28 120">
    <g fill="none" stroke="#e0e0e0" stroke-width="1.6" stroke-linecap="round">
      <circle cx="16" cy="12" r="5.5"/><path d="M12 16L7.5 20.5" stroke-width="2.4"/><path d="M16 9V15M13 12H19" stroke-width="1.3"/>
    </g>
    <path d="M9 48L9 39Q9 37.5 10.3 37.5Q11.5 37.5 11.5 39V44V35.5Q11.5 34 12.8 34Q14 34 14 35.5V43V34Q14 32.5 15.3 32.5Q16.5 32.5 16.5 34V43V35Q16.5 33.5 17.8 33.5Q19 33.5 19 35V44L19.5 42Q20.5 40 21.7 40.5Q22.5 41 22 42.5L19.5 49Q18 52 15 52H13Q9 52 9 48Z" fill="#e0e0e0"/>
    <g fill="none" stroke="#e0e0e0" stroke-width="1.3">
      <path d="M8 68h12v4H8z"/><circle cx="11" cy="69.5" r="2.5"/><circle cx="17" cy="69.5" r="2.5"/>
      <rect x="10" y="74" width="8" height="6"/><path d="M18 77L21 74.5V79.5Z"/>
    </g>
    <g fill="none" stroke="#e0e0e0" stroke-width="1.4">
      <path d="M9.5 99H18.5L21 109H7Z"/><path d="M7.7 102.5H20.3M7.3 106H20.7M12.5 99L11.8 109M15.5 99L16.2 109"/>
    </g>
  </svg>
  <svg class="a" style="left:782px;top:132px" width="8" height="12"><path d="M6 2L2 6L6 10" fill="none" stroke="#9a9a9a" stroke-width="1.3"/></svg>
  <!-- outliner -->
  <div class="a" style="left:794px;top:64px;width:165px;height:307px;background:#282828;border-radius:6px"></div>
  <!-- properties -->
  <div class="a" style="left:794px;top:374px;width:165px;height:654px;background:#2e2e2e;border-radius:6px"></div>
  <div class="a" style="left:794px;top:399px;width:28px;height:629px;background:#1d1d1d"></div>
  <!-- timeline -->

  <!-- titlebar -->
  <div class="t" style="left:379px;top:10px;font-size:14px;line-height:16px;font-weight:bold;color:#8f8f8d">(Unsaved) - Blender 4.2 Alpha</div>
  <div class="a" style="left:870px;top:20px;width:9px;height:2px;background:#5e5c5a"></div>
  <div class="a" style="left:905px;top:14px;width:8px;height:8px;border:2px solid #5e5c5a"></div>
  <svg class="a" style="left:937px;top:13px" width="10" height="10"><path d="M1 1L9 9M9 1L1 9" stroke="#5e5c5a" stroke-width="2"/></svg>
  <!-- topbar -->
  <svg class="a" style="left:10px;top:42px" width="16" height="16" viewBox="0 0 16 16"><circle cx="9.5" cy="9.5" r="4.5" fill="none" stroke="#dcdcdc" stroke-width="2.2"/><circle cx="9.5" cy="9.5" r="1.6" fill="#dcdcdc"/><path d="M1 10L7 5.5M3 5H9M7 2L12 5" stroke="#dcdcdc" stroke-width="2" stroke-linecap="round"/></svg>
  <div class="t" style="left:35px;top:43px">File</div>
  <div class="t" style="left:68px;top:43px">Edit</div>
  <div class="t" style="left:104px;top:43px">Render</div>
  <div class="t" style="left:157px;top:43px">Window</div>
  <div class="t" style="left:214px;top:43px">Help</div>
  <div class="a" style="left:264px;top:43px;width:54px;height:21px;background:#303030;border-radius:4px 4px 0 0"></div>
  <div class="t" style="left:273px;top:46px;color:#fff">Layout</div>
  <div class="t" style="left:329px;top:46px;color:#adadad">Modeling</div>
  <div class="t" style="left:398px;top:46px;color:#adadad">Sculpting</div>
  <div class="t" style="left:468px;top:46px;color:#adadad">UV Editing</div>
  <div class="t" style="left:544px;top:46px;color:#adadad">Texture Paint</div>
  <!-- scene widget -->
  <div class="a" style="left:623px;top:41px;width:171px;height:20px;background:#282828;border-radius:4px;border:1px solid #333"></div>
  <div class="a" style="left:654px;top:42px;width:100px;height:18px;background:#1d1d1d"></div>
  <div class="a" style="left:754px;top:42px;width:20px;height:18px;background:#3d3d3d"></div>
  <div class="t" style="left:662px;top:43px">Scene</div>
  <div class="a" style="left:800px;top:41px;width:151px;height:20px;background:#282828;border-radius:4px;border:1px solid #333"></div>
  <div class="a" style="left:831px;top:42px;width:80px;height:18px;background:#1d1d1d"></div>
  <div class="a" style="left:911px;top:42px;width:20px;height:18px;background:#3d3d3d"></div>
  <div class="t" style="left:839px;top:43px">ViewLayer</div>
  <!-- viewport header -->
  <div class="a" style="left:1px;top:64px;width:790px;height:22px;background:#282828;border-radius:5px 5px 0 0"></div>
  <div class="a hb" style="left:10px;top:67px;width:30px;height:18px"></div>
  <div class="a hb" style="left:47px;top:67px;width:109px;height:18px"></div>
  <div class="t" style="left:72px;top:69px">Object Mode</div>
  <div class="t" style="left:169px;top:69px">View</div>
  <div class="t" style="left:210px;top:69px">Select</div>
  <div class="t" style="left:258px;top:69px">Add</div>
  <div class="t" style="left:295px;top:69px">Object</div>
  <div class="a hb" style="left:355px;top:67px;width:76px;height:18px"></div>
  <div class="t" style="left:381px;top:69px">Global</div>
  <div class="a hb" style="left:438px;top:67px;width:30px;height:18px"></div>
  <div class="a hb" style="left:475px;top:67px;width:50px;height:18px"></div>
  <div class="a" style="left:475px;top:67px;width:18px;height:18px;background:#3d3d3d;border-radius:4px 0 0 4px"></div>
  <div class="a hb" style="left:532px;top:67px;width:50px;height:18px"></div>
  <div class="a" style="left:532px;top:67px;width:18px;height:18px;background:#3d3d3d;border-radius:4px 0 0 4px"></div>
  <div class="a hb" style="left:600px;top:67px;width:30px;height:18px"></div>
  <div class="a hb" style="left:637px;top:67px;width:38px;height:18px"></div>
  <div class="a" style="left:637px;top:67px;width:18px;height:18px;background:#4772b3;border-radius:4px 0 0 4px"></div>
  <div class="a hb" style="left:682px;top:67px;width:38px;height:18px"></div>
  <div class="a" style="left:682px;top:67px;width:18px;height:18px;background:#4772b3;border-radius:4px 0 0 4px"></div>
  <div class="a hb" style="left:727px;top:67px;width:18px;height:18px;background:#3d3d3d"></div>
  <div class="a hb" style="left:752px;top:67px;width:37px;height:18px;background:#3d3d3d"></div>
  <div class="a" style="left:771px;top:67px;width:18px;height:18px;background:#4772b3;border-radius:0 4px 4px 0"></div>
  <!-- outliner header -->
  <div class="a hb" style="left:802px;top:67px;width:32px;height:19px;background:#232323"></div>
  <div class="a hb" style="left:840px;top:67px;width:31px;height:19px;background:#232323"></div>
  <div class="a hb" style="left:888px;top:67px;width:75px;height:19px;background:#1d1d1d"></div>
  <div class="t" style="left:913px;top:70px;color:#777">Search</div>
  <svg class="a" style="left:620px;top:36px" width="340" height="52" viewBox="1580 38 340 52">
   <g fill="#e0e0e0">
    <rect x="1767" y="71" width="5" height="3"/><rect x="1772" y="76" width="7" height="3"/><rect x="1772" y="81" width="7" height="3"/>
    <path d="M1807 72H1816V81H1807ZM1808.5 80L1811 75.5L1813.5 80Z" fill-rule="evenodd"/>
    <path d="M1594 44Q1597 49 1597 52A3 3 0 0 1 1591 52Q1591 49 1594 44Z"/>
    <circle cx="1601" cy="45" r="1.6"/>
    <path d="M1774 47H1783V56H1774ZM1775.5 55L1778 50.5L1780.5 55Z" fill-rule="evenodd"/>
   </g>
   <g fill="none" stroke="#e0e0e0" stroke-width="1.2">
    <path d="M1768 74V82.5H1772M1768 77.5H1772"/>
    <path d="M1782 76L1785 79L1788 76"/><path d="M1805 74V83H1814"/><path d="M1803 76V85H1812"/><path d="M1819.5 76L1822.5 79L1825.5 76"/>
    <circle cx="1858" cy="77" r="3.8"/><path d="M1855.3 79.7L1851.5 83.5"/>
    <circle cx="1598" cy="54" r="2.8"/><path d="M1607 50L1610 53L1613 50"/>
    <path d="M1700 48L1704 52L1702 53L1699 56L1695 52L1698 50ZM1697 54L1693 58" stroke="#999"/>
    <path d="M1717 49H1722V57H1717ZM1719 49V46H1726L1729 49V55H1722" stroke="#ddd"/>
    <path d="M1740 48L1748 56M1748 48L1740 56" stroke="#777"/>
    <path d="M1772 49V58H1781"/><path d="M1770 51V60H1779" stroke-width="1"/><path d="M1786 50L1789 53L1792 50"/>
    <path d="M1875 49H1880V57H1875ZM1877 49V46H1884L1887 49V55H1880" stroke="#ddd"/>
    <path d="M1898 48L1906 56M1906 48L1898 56" stroke="#777"/>
   </g>
  </svg>
</div>

  <!-- viewport header icons -->
<svg class="a" style="left:960px;top:60px" width="800" height="32" viewBox="960 60 800 32">
 <g fill="none" stroke="#e0e0e0" stroke-width="1.3" stroke-linecap="round">
  <!-- editor type: 3d viewport -->
  <path d="M974 80H988M976.5 77L975.5 85M984.5 77L985.5 85M975 77.5H981"/>
  <path d="M991.5 77L994.5 80L997.5 77"/>
  <!-- object mode chevron -->
  <path d="M1107 77L1110.5 80.5L1114 77"/>
  <path d="M1011 75V71.5H1014.5M1021.5 71.5H1025V75M1025 81V84.5H1021.5M1014.5 84.5H1011V81"/>
  <!-- global axes -->
  <path d="M1320 71.5V83.5H1333M1320 83.5L1331 73.5M1331 73.5V77M1331 73.5H1327.5M1318 73.5L1320 71.5L1322 73.5M1331 81.5L1333 83.5L1331 85.5"/>
  <path d="M1382 77L1385.5 80.5L1389 77"/>
  <!-- pivot -->
  <circle cx="1405.5" cy="80.5" r="3.6"/><circle cx="1411.5" cy="75.5" r="3.6"/>
  <path d="M1420 77L1423 80L1426 77"/>
  <!-- magnet -->
  <path d="M1438 79.5L1443 74.5A4.2 4.2 0 0 1 1449 80.5L1444 85.5M1441 82.5L1445 78.5A0.9 0.9 0 0 1 1446.2 79.7L1442 83.7" stroke="#9a9a9a" stroke-width="1.3" fill="none"/>
  <!-- increment -->
  <path d="M1457 81.5H1470M1457 79V84M1461.5 79V84M1466 79V84M1470 79V84"/>
  <path d="M1476 77L1479.5 80.5L1483 77"/>
  <!-- prop edit -->
  <circle cx="1501" cy="78" r="5.8" stroke="#8a8a8a"/>
  <path d="M1515 84Q1519 70 1522 71Q1525 70 1529 84" stroke="#a0a0a0"/>
  <path d="M1534 77L1537 80L1540 77" stroke="#666"/>
  <!-- select chevron -->
  <path d="M1581 77L1584.5 80.5L1588 77"/>
  <path d="M1622 77L1625.5 80.5L1629 77"/>
  <path d="M1667 77L1670.5 80.5L1674 77"/>
  <!-- gizmo icon -->
  <path d="M1601 84Q1605 73 1613 72M1609 72H1613V76M1613 72L1606 79" stroke="#fff"/>
  <circle cx="1601" cy="83.5" r="1.5" stroke="#fff"/>
  <!-- xray -->
  <rect x="1689.5" y="75" width="9" height="9"/><path d="M1692 75V72H1702V81H1698.5"/>
  <!-- wireframe -->
  <circle cx="1720.5" cy="78" r="6"/><path d="M1714.5 78H1726.5M1715.5 75H1725.5M1715.5 81H1725.5"/><ellipse cx="1720.5" cy="78" rx="2.6" ry="6"/>
 </g>
 <g fill="#e0e0e0">
  <circle cx="985" cy="74.5" r="3.3"/>
  <rect x="1013.5" y="74" width="9" height="8.5"/>
  <circle cx="1405.5" cy="80.5" r="1.2"/>
  <rect x="1465.5" y="71.5" width="4" height="4"/>
  <circle cx="1501" cy="78" r="1.7" fill="#9a9a9a"/>
  <path d="M1565 71Q1570 66 1575 71Q1570 76 1565 71Z"/>
  <path d="M1562 75L1569 78L1566 80L1565 84Z"/>
  <circle cx="1740" cy="78" r="6.3" fill="#fff"/>
 </g>
 <circle cx="1570" cy="71" r="1.8" fill="#1e1e1e"/>
 <!-- overlay icon -->
 <circle cx="1653" cy="75.5" r="5" fill="#fff"/>
 <circle cx="1648.5" cy="80.5" r="4.8" fill="none" stroke="#fff" stroke-width="1.3"/>
 <path d="M1651 76Q1651 73 1654 73" stroke="#4772b3" stroke-width="1"/>
</svg>
<!-- timeline -->
<div class="a" style="left:1009px;top:958px;width:742px;height:71px;background:#2b2b2b;border-radius:0 6px 6px 0"></div>
<div class="a" style="left:1009px;top:983px;width:742px;height:23px;background:#1c1c1c"></div>
<div class="a" style="left:1009px;top:1006px;width:731px;height:13px;background:#2b2b2b"></div>
<div class="a" style="left:1009px;top:1019px;width:731px;height:8px;background:#2b2b2b"></div>
<div class="a hb" style="left:1008px;top:962px;width:131px;height:19px;background:#282828"></div>
<div class="a" style="left:1077px;top:963px;width:1px;height:17px;background:#3a3a3a"></div>
<div class="t" style="left:1013px;top:964px">Playback</div><svg class="a" style="left:1066px;top:968px" width="10" height="8"><path d="M1 2L5 6L9 2" fill="none" stroke="#ccc" stroke-width="1.3"/></svg>
<div class="t" style="left:1085px;top:964px">Keying</div><svg class="a" style="left:1127px;top:968px" width="10" height="8"><path d="M1 2L5 6L9 2" fill="none" stroke="#ccc" stroke-width="1.3"/></svg>
<div class="t" style="left:1148px;top:964px">View</div>
<div class="t" style="left:1189px;top:964px">Marker</div>
<div class="a hb" style="left:1263px;top:962px;width:38px;height:19px;background:#282828"></div>
<div class="a" style="left:1264px;top:963px;width:18px;height:17px;background:#3d3d3d;border-radius:3px 0 0 3px"></div>
<svg class="a" style="left:1266px;top:964px" width="14" height="14"><circle cx="7" cy="7" r="5" fill="none" stroke="#ccc" stroke-width="1.2"/></svg>
<svg class="a" style="left:1287px;top:968px" width="10" height="8"><path d="M1 2L5 6L9 2" fill="none" stroke="#666" stroke-width="1.3"/></svg>
<div class="a hb" style="left:1309px;top:962px;width:118px;height:19px;background:#3d3d3d"></div>
<svg class="a" style="left:1309px;top:962px" width="118" height="19" viewBox="0 0 118 19"><g fill="#e6e6e6">
<rect x="4" y="4" width="2" height="11"/><path d="M14 4V15L7 9.5Z"/>
<path d="M24 9.5L29 4.5V14.5ZM29 9.5L34 4.5V14.5Z"/><path d="M36 9.5L31 4.5V14.5Z" opacity="0"/>
<path d="M52 4V15L45 9.5Z"/>
<path d="M64 4V15L71 9.5Z"/>
<path d="M82 4.5L87 9.5L82 14.5ZM87 4.5L92 9.5L87 14.5Z"/>
<path d="M103 4V15L110 9.5Z"/><rect x="111" y="4" width="2" height="11"/>
</g><g stroke="#303030" stroke-width="1"><path d="M19.5 1V18M39.5 1V18M58.5 1V18M78.5 1V18M98.5 1V18"/></g></svg>
<div class="a" style="left:1470px;top:962px;width:73px;height:19px;background:#545454;border-radius:4px"></div>
<div class="t" style="left:1470px;top:964px;width:73px;text-align:center">1</div>
<div class="a" style="left:1550px;top:962px;width:193px;height:19px;background:#545454;border-radius:4px"></div>
<div class="a" style="left:1550px;top:962px;width:19px;height:19px;background:#3d3d3d;border-radius:4px 0 0 4px"></div>
<div class="a" style="left:1658px;top:962px;width:1px;height:19px;background:#3d3d3d"></div>
<svg class="a" style="left:1551px;top:963px" width="17" height="17"><circle cx="8.5" cy="9.5" r="6" fill="none" stroke="#ddd" stroke-width="1.3"/><path d="M8.5 9.5V6M6.5 2H10.5M13 4L14.5 5.5" stroke="#ddd" stroke-width="1.3"/></svg>
<div class="t" style="left:1584px;top:964px">Start</div><div class="t" style="left:1638px;top:964px">1</div>
<div class="t" style="left:1674px;top:964px">End</div><div class="t" style="left:1709px;top:964px">250</div>
<div class="t" style="left:1025px;top:988px;width:40px;text-align:center;color:#ddd">20</div>
<div class="t" style="left:1084px;top:988px;width:40px;text-align:center;color:#ddd">40</div>
<div class="t" style="left:1143px;top:988px;width:40px;text-align:center;color:#ddd">60</div>
<div class="t" style="left:1202px;top:988px;width:40px;text-align:center;color:#ddd">80</div>
<div class="t" style="left:1260px;top:988px;width:40px;text-align:center;color:#ddd">100</div>
<div class="t" style="left:1319px;top:988px;width:40px;text-align:center;color:#ddd">120</div>
<div class="t" style="left:1378px;top:988px;width:40px;text-align:center;color:#ddd">140</div>
<div class="t" style="left:1437px;top:988px;width:40px;text-align:center;color:#ddd">160</div>
<div class="t" style="left:1496px;top:988px;width:40px;text-align:center;color:#ddd">180</div>
<div class="t" style="left:1555px;top:988px;width:40px;text-align:center;color:#ddd">200</div>
<div class="t" style="left:1614px;top:988px;width:40px;text-align:center;color:#ddd">220</div>
<div class="t" style="left:1673px;top:988px;width:40px;text-align:center;color:#ddd">240</div>
<div class="a" style="left:1016px;top:1006px;width:1px;height:13px;background:#1a1a1a"></div><div class="a" style="left:1045px;top:1006px;width:1px;height:13px;background:#1a1a1a"></div><div class="a" style="left:1075px;top:1006px;width:1px;height:13px;background:#1a1a1a"></div><div class="a" style="left:1104px;top:1006px;width:1px;height:13px;background:#1a1a1a"></div><div class="a" style="left:1134px;top:1006px;width:1px;height:13px;background:#1a1a1a"></div><div class="a" style="left:1163px;top:1006px;width:1px;height:13px;background:#1a1a1a"></div><div class="a" style="left:1193px;top:1006px;width:1px;height:13px;background:#1a1a1a"></div><div class="a" style="left:1222px;top:1006px;width:1px;height:13px;background:#1a1a1a"></div><div class="a" style="left:1252px;top:1006px;width:1px;height:13px;background:#1a1a1a"></div><div class="a" style="left:1281px;top:1006px;width:1px;height:13px;background:#1a1a1a"></div><div class="a" style="left:1311px;top:1006px;width:1px;height:13px;background:#1a1a1a"></div><div class="a" style="left:1340px;top:1006px;width:1px;height:13px;background:#1a1a1a"></div><div class="a" style="left:1370px;top:1006px;width:1px;height:13px;background:#1a1a1a"></div><div class="a" style="left:1399px;top:1006px;width:1px;height:13px;background:#1a1a1a"></div><div class="a" style="left:1429px;top:1006px;width:1px;height:13px;background:#1a1a1a"></div><div class="a" style="left:1458px;top:1006px;width:1px;height:13px;background:#1a1a1a"></div><div class="a" style="left:1488px;top:1006px;width:1px;height:13px;background:#1a1a1a"></div><div class="a" style="left:1517px;top:1006px;width:1px;height:13px;background:#1a1a1a"></div><div class="a" style="left:1547px;top:1006px;width:1px;height:13px;background:#1a1a1a"></div><div class="a" style="left:1576px;top:1006px;width:1px;height:13px;background:#1a1a1a"></div><div class="a" style="left:1606px;top:1006px;width:1px;height:13px;background:#1a1a1a"></div><div class="a" style="left:1635px;top:1006px;width:1px;height:13px;background:#1a1a1a"></div><div class="a" style="left:1665px;top:1006px;width:1px;height:13px;background:#1a1a1a"></div><div class="a" style="left:1694px;top:1006px;width:1px;height:13px;background:#1a1a1a"></div><div class="a" style="left:1724px;top:1006px;width:1px;height:13px;background:#1a1a1a"></div>
<div class="a" style="left:1009px;top:1019px;width:731px;height:8px;border-radius:4px;background:#545454"></div>
<div class="a" style="left:1734px;top:1020px;width:6px;height:6px;border-radius:3px;background:#2b2b2b"></div>
<svg class="a" style="left:1744px;top:999px" width="8" height="12"><path d="M6 2L2 6L6 10" fill="none" stroke="#888" stroke-width="1.2"/></svg>
<div class="a" style="left:1009px;top:1029px;width:910px;height:13px;background:#1a1a1a"></div>
<svg class="a" style="left:1183px;top:1033px" width="10" height="9"><rect x="1" y="1" width="8" height="9" rx="3" fill="none" stroke="#aaa" stroke-width="1.2"/><rect x="4.3" y="2" width="1.4" height="3" fill="#aaa"/></svg>
<svg class="a" style="left:1395px;top:1033px" width="10" height="9"><rect x="1" y="1" width="8" height="9" rx="3" fill="none" stroke="#aaa" stroke-width="1.2"/><rect x="5" y="1" width="4" height="4" fill="#aaa"/></svg>
<!-- outliner -->
<div class="a" style="left:1754px;top:113px;width:165px;height:20px;background:#2b2b2b"></div>
<div class="a" style="left:1754px;top:153px;width:165px;height:20px;background:#2b2b2b"></div>
<div class="a" style="left:1754px;top:193px;width:165px;height:20px;background:#2b2b2b"></div>
<div class="a" style="left:1754px;top:233px;width:165px;height:20px;background:#2b2b2b"></div>
<div class="a" style="left:1754px;top:273px;width:165px;height:20px;background:#2b2b2b"></div>
<div class="a" style="left:1754px;top:313px;width:165px;height:20px;background:#2b2b2b"></div>
<div class="a" style="left:1754px;top:353px;width:165px;height:20px;background:#2b2b2b"></div>
<div class="a" style="left:1754px;top:152px;width:165px;height:20px;background:#334d80"></div>
<svg class="a" style="left:1777px;top:96px" width="14" height="14" viewBox="0 0 14 14"><rect x="0" y="0" width="14" height="4" fill="#e0e0e0"/><rect x="1" y="5" width="12" height="8.5" fill="#e0e0e0"/><rect x="5" y="7" width="4" height="1.6" fill="#282828"/></svg>
<div class="t" style="left:1798px;top:96px">Scene Col</div>
<svg class="a" style="left:1779px;top:119px" width="10" height="8"><path d="M1 2L5 6L9 2" fill="none" stroke="#bbb" stroke-width="1.3"/></svg>
<div class="a" style="left:1794px;top:113px;width:20px;height:19px;border-radius:4px;background:#3d3d3d;border:1px solid #555"></div>
<svg class="a" style="left:1797px;top:116px" width="14" height="14" viewBox="0 0 14 14"><rect x="0" y="0" width="14" height="4" fill="#e0e0e0"/><rect x="1" y="5" width="12" height="8.5" fill="#e0e0e0"/><rect x="5" y="7" width="4" height="1.6" fill="#3d3d3d"/></svg>
<div class="t" style="left:1818px;top:116px">Collec</div>
<svg class="a" style="left:1853px;top:116px" width="13" height="13"><rect x="0" y="0" width="13" height="13" rx="1.5" fill="#e6e6e6"/><path d="M3 6.5L5.5 9L10 3.5" fill="none" stroke="#222" stroke-width="1.8"/></svg>
<svg class="a" style="left:1872px;top:117px" width="16" height="12" viewBox="0 0 16 12"><path d="M1 6Q8 -2 15 6Q8 14 1 6Z" fill="#e6e6e6"/><circle cx="8" cy="6" r="3" fill="#282828"/><circle cx="8" cy="6" r="1.6" fill="#e6e6e6"/></svg>
<svg class="a" style="left:1893px;top:116px" width="15" height="13" viewBox="0 0 15 13"><path d="M1 3H4L5.5 1H9.5L11 3H14V12H1Z" fill="#e6e6e6"/><circle cx="7.5" cy="7.3" r="3.3" fill="#282828"/><circle cx="7.5" cy="7.3" r="2" fill="#e6e6e6"/></svg>
<div class="a" style="left:1783px;top:137px;width:1px;height:50px;background:#555"></div>
<svg class="a" style="left:1800px;top:137px" width="8" height="10"><path d="M2 1L6 5L2 9" fill="none" stroke="#bbb" stroke-width="1.3"/></svg>
<svg class="a" style="left:1816px;top:135px" width="16" height="14" viewBox="0 0 16 14"><circle cx="5" cy="4" r="3" fill="#e9924a"/><circle cx="11" cy="4" r="3" fill="#e9924a"/><rect x="2" y="7" width="9" height="6" fill="#e9924a"/><path d="M11 10L15 7.5V12.5Z" fill="#e9924a"/></svg>
<div class="t" style="left:1838px;top:135px;color:#e6e6e6">Ca</div>
<svg class="a" style="left:1872px;top:136px" width="16" height="12" viewBox="0 0 16 12"><path d="M1 6Q8 -2 15 6Q8 14 1 6Z" fill="#e6e6e6"/><circle cx="8" cy="6" r="3" fill="#282828"/><circle cx="8" cy="6" r="1.6" fill="#e6e6e6"/></svg>
<svg class="a" style="left:1893px;top:135px" width="15" height="13" viewBox="0 0 15 13"><path d="M1 3H4L5.5 1H9.5L11 3H14V12H1Z" fill="#e6e6e6"/><circle cx="7.5" cy="7.3" r="3.3" fill="#282828"/><circle cx="7.5" cy="7.3" r="2" fill="#e6e6e6"/></svg>
<svg class="a" style="left:1800px;top:157px" width="8" height="10"><path d="M2 1L6 5L2 9" fill="none" stroke="#bbb" stroke-width="1.3"/></svg>
<div class="a" style="left:1814px;top:153px;width:20px;height:19px;border-radius:4px;background:#55678a;border:1px solid #6b7ea5"></div>
<svg class="a" style="left:1817px;top:156px" width="14" height="13" viewBox="0 0 14 13"><path d="M1.5 1.5H12.5L7 11.5Z" fill="none" stroke="#e9924a" stroke-width="2.2" stroke-linejoin="round"/></svg>
<div class="t" style="left:1838px;top:155px;color:#f0a540">Cu</div>
<svg class="a" style="left:1872px;top:156px" width="16" height="12" viewBox="0 0 16 12"><path d="M1 6Q8 -2 15 6Q8 14 1 6Z" fill="#e6e6e6"/><circle cx="8" cy="6" r="3" fill="#282828"/><circle cx="8" cy="6" r="1.6" fill="#e6e6e6"/></svg>
<svg class="a" style="left:1893px;top:155px" width="15" height="13" viewBox="0 0 15 13"><path d="M1 3H4L5.5 1H9.5L11 3H14V12H1Z" fill="#e6e6e6"/><circle cx="7.5" cy="7.3" r="3.3" fill="#282828"/><circle cx="7.5" cy="7.3" r="2" fill="#e6e6e6"/></svg>
<svg class="a" style="left:1800px;top:177px" width="8" height="10"><path d="M2 1L6 5L2 9" fill="none" stroke="#bbb" stroke-width="1.3"/></svg>
<svg class="a" style="left:1817px;top:174px" width="14" height="16" viewBox="0 0 14 16"><circle cx="7" cy="6" r="5.5" fill="#e9924a"/><rect x="4" y="10" width="6" height="3" fill="#e9924a"/><rect x="4.5" y="13.5" width="5" height="1.5" fill="#e9924a"/><path d="M5 5.5L7 8L9 5.5" fill="none" stroke="#282828" stroke-width="1"/></svg>
<div class="t" style="left:1838px;top:175px;color:#e6e6e6">Li</div>
<svg class="a" style="left:1872px;top:176px" width="16" height="12" viewBox="0 0 16 12"><path d="M1 6Q8 -2 15 6Q8 14 1 6Z" fill="#e6e6e6"/><circle cx="8" cy="6" r="3" fill="#282828"/><circle cx="8" cy="6" r="1.6" fill="#e6e6e6"/></svg>
<svg class="a" style="left:1893px;top:175px" width="15" height="13" viewBox="0 0 15 13"><path d="M1 3H4L5.5 1H9.5L11 3H14V12H1Z" fill="#e6e6e6"/><circle cx="7.5" cy="7.3" r="3.3" fill="#282828"/><circle cx="7.5" cy="7.3" r="2" fill="#e6e6e6"/></svg>
<div class="a" style="left:1762px;top:367px;width:104px;height:4px;border-radius:2px;background:#474747"></div>
<!-- properties -->
<div class="a hb" style="left:1762px;top:378px;width:31px;height:20px;background:#282828"></div>
<svg class="a" style="left:1767px;top:381px" width="24" height="14" viewBox="0 0 24 14"><rect x="1" y="1" width="13" height="5.5" rx="2.7" fill="#e6e6e6"/><rect x="1" y="7.5" width="13" height="5.5" rx="2.7" fill="#e6e6e6"/><rect x="7" y="2.3" width="5.5" height="3" rx="1.5" fill="#282828"/><rect x="7" y="8.8" width="5.5" height="3" rx="1.5" fill="#282828"/><path d="M17 5.5L19.5 8L22 5.5" fill="none" stroke="#ddd" stroke-width="1.2"/></svg>
<div class="a hb" style="left:1816px;top:378px;width:110px;height:20px;background:#1d1d1d"></div>
<svg class="a" style="left:1820px;top:380px" width="16" height="16"><circle cx="10" cy="6" r="4.5" fill="none" stroke="#ddd" stroke-width="1.3"/><path d="M6.8 9.2L2 14" stroke="#ddd" stroke-width="1.3"/></svg>
<div class="t" style="left:1840px;top:381px;color:#777">Search</div>
<div class="a" style="left:1756px;top:630px;width:26px;height:26px;background:#2e2e2e;border-radius:4px 0 0 4px"></div>
<div class="a" style="left:1756px;top:824px;width:26px;height:1px;background:#262626"></div>
<div class="a" style="left:1756px;top:860px;width:26px;height:1px;background:#262626"></div>
<svg class="a" style="left:1761px;top:415px" width="16" height="16" viewBox="0 0 15 15"><path d="M3 2V8" stroke="#ddd" stroke-width="1.2"/><circle cx="3" cy="11" r="2.2" fill="#ccc"/><path d="M9 13V6M6.5 1.5V4.5L9 6L11.5 4.5V1.5" fill="none" stroke="#ddd" stroke-width="1.8"/></svg>
<svg class="a" style="left:1761px;top:451px" width="16" height="16" viewBox="0 0 15 15"><rect x="1" y="5" width="13" height="8" fill="none" stroke="#ddd" stroke-width="1.6"/><path d="M3.5 8H10M3.5 10.5H10M5 2.5H9" stroke="#ddd" stroke-width="1.3"/></svg>
<svg class="a" style="left:1761px;top:480px" width="16" height="16" viewBox="0 0 15 15"><rect x="1" y="6" width="13" height="3" fill="#ddd"/><path d="M3 4V1H12V4" fill="none" stroke="#ddd" stroke-width="1.4"/><path d="M3 9V13H12V9" fill="none" stroke="#ddd" stroke-width="1.4"/></svg>
<svg class="a" style="left:1761px;top:507px" width="16" height="16" viewBox="0 0 15 15"><rect x="4" y="1" width="10" height="9" fill="none" stroke="#ddd" stroke-width="1.4"/><path d="M2 3V12H11" fill="none" stroke="#ddd" stroke-width="1.2"/><path d="M6 8L8.5 4.5L11 8Z" fill="#ddd"/></svg>
<svg class="a" style="left:1761px;top:535px" width="16" height="16" viewBox="0 0 15 15"><path d="M4 1L7 7A3 3 0 1 1 1 7Z" fill="#ddd"/><circle cx="10" cy="10" r="3" fill="none" stroke="#ddd" stroke-width="1.3"/><circle cx="11" cy="3" r="1.5" fill="#ddd"/></svg>
<svg class="a" style="left:1761px;top:563px" width="16" height="16" viewBox="0 0 15 15"><circle cx="7.5" cy="7.5" r="6" fill="#c44a4a"/><path d="M3 4Q6 6 5 9Q8 10 9 13M8 2Q9 5 12 5" fill="none" stroke="#1d1d1d" stroke-width="1.6"/></svg>
<svg class="a" style="left:1761px;top:599px" width="16" height="16" viewBox="0 0 15 15"><rect x="1" y="1" width="13" height="4" fill="#ddd"/><rect x="2" y="6" width="11" height="8" fill="none" stroke="#ddd" stroke-width="1.4"/><rect x="6" y="8" width="3" height="1.3" fill="#ddd"/></svg>
<svg class="a" style="left:1761px;top:635px" width="16" height="16" viewBox="0 0 15 15"><path d="M1 4V1H4M11 1H14V4M14 11V14H11M4 14H1V11" fill="none" stroke="#e9924a" stroke-width="1.4"/><rect x="3.5" y="3.5" width="8" height="8" fill="#e9924a"/></svg>
<svg class="a" style="left:1761px;top:664px" width="16" height="16" viewBox="0 0 15 15"><path d="M2.5 12.5L8 7" stroke="#5d8ce0" stroke-width="2.6" stroke-linecap="round"/><path d="M7 8A4 4 0 0 1 12 2.5L9.8 4.7L10.3 6.5L12.3 7L14.2 5A4 4 0 0 1 8.5 9.5Z" fill="#5d8ce0"/></svg>
<svg class="a" style="left:1761px;top:691px" width="16" height="16" viewBox="0 0 15 15"><circle cx="3" cy="3" r="2.4" fill="#5d8ce0"/><circle cx="12.5" cy="3" r="1.5" fill="#5d8ce0"/><circle cx="3" cy="12.5" r="1.5" fill="#5d8ce0"/><circle cx="12" cy="12" r="1.8" fill="#5d8ce0"/><path d="M3 3H12.5M3 3V12.5M3 3L12 12" stroke="#5d8ce0" stroke-width="1.2"/></svg>
<svg class="a" style="left:1761px;top:719px" width="16" height="16" viewBox="0 0 15 15"><path d="M11 11.5A5.5 5.5 0 1 1 4 3" fill="none" stroke="#5d8ce0" stroke-width="1.3"/><circle cx="7" cy="8.5" r="2.8" fill="#5d8ce0"/><circle cx="12" cy="3.5" r="1.8" fill="#5d8ce0"/></svg>
<svg class="a" style="left:1761px;top:748px" width="16" height="16" viewBox="0 0 15 15"><path d="M2 11Q1 7 5 4Q10 0 13 2Q15 5 10 10Q6 14 2 11Z" fill="none" stroke="#5d8ce0" stroke-width="1.3"/><circle cx="6.5" cy="8.5" r="2.6" fill="none" stroke="#5d8ce0" stroke-width="1.3"/><circle cx="6.5" cy="8.5" r="1" fill="#5d8ce0"/></svg>
<svg class="a" style="left:1761px;top:776px" width="16" height="16" viewBox="0 0 15 15"><path d="M2.5 2.5H12.5L7.5 12" fill="none" stroke="#2fb07f" stroke-width="1.3"/><path d="M7.5 12L2.5 2.5" stroke="#2fb07f" stroke-width="1.3"/><rect x="0.8" y="0.8" width="3.4" height="3.4" fill="#1d1d1d" stroke="#2fb07f" stroke-width="1.1"/><rect x="10.8" y="0.8" width="3.4" height="3.4" fill="#1d1d1d" stroke="#2fb07f" stroke-width="1.1"/><rect x="5.8" y="10.8" width="3.4" height="3.4" fill="#1d1d1d" stroke="#2fb07f" stroke-width="1.1"/></svg>
<svg class="a" style="left:1761px;top:804px" width="16" height="16" viewBox="0 0 15 15"><circle cx="7.5" cy="7.5" r="6.8" fill="#c45a5a"/><path d="M7.5 7.5V14.3A6.8 6.8 0 0 1 0.7 7.5Z" fill="#1d1d1d"/><path d="M7.5 7.5V0.7A6.8 6.8 0 0 1 14.3 7.5Z" fill="#e9a0a0" opacity=".5"/></svg>
<svg class="a" style="left:1761px;top:840px" width="16" height="16" viewBox="0 0 15 15"><rect x="1" y="1" width="13" height="13" fill="#c45a5a"/><path d="M1 1H4.25V4.25H1ZM7.5 1H10.75V4.25H7.5ZM4.25 4.25H7.5V7.5H4.25ZM10.75 4.25H14V7.5H10.75ZM1 7.5H4.25V10.75H1ZM7.5 7.5H10.75V10.75H7.5ZM4.25 10.75H7.5V14H4.25ZM10.75 10.75H14V14H10.75Z" fill="#1d1d1d"/></svg>
<svg class="a" style="left:1793px;top:412px" width="14" height="14" viewBox="0 0 15 15"><path d="M1 4V1H4M11 1H14V4M14 11V14H11M4 14H1V11" fill="none" stroke="#ddd" stroke-width="1.3"/><rect x="3.5" y="3.5" width="8" height="8" fill="#e6e6e6"/></svg>
<div class="t" style="left:1816px;top:412px">Cube</div>
<svg class="a" style="left:1894px;top:411px" width="16" height="16"><path d="M9 2L14 7L12 8L10 11L5 6L8 4Z" fill="none" stroke="#bbb" stroke-width="1.2"/><path d="M7 9L2 14" stroke="#bbb" stroke-width="1.2"/></svg>
<div class="a hb" style="left:1791px;top:445px;width:121px;height:19px;background:#1d1d1d"></div>
<div class="a" style="left:1792px;top:446px;width:29px;height:17px;background:#282828;border-radius:4px 0 0 4px"></div>
<svg class="a" style="left:1796px;top:448px" width="24" height="14" viewBox="0 0 24 14"><path d="M1 4V1H4M9 1H12V4M12 9V12H9M4 12H1V9" fill="none" stroke="#ddd" stroke-width="1.2"/><rect x="3" y="3" width="7" height="7" fill="#e6e6e6"/><path d="M15 5L17.5 7.5L20 5" fill="none" stroke="#ddd" stroke-width="1.2"/></svg>
<div class="t" style="left:1829px;top:448px">Cube</div>
<div class="a" style="left:1790px;top:475px;width:122px;height:280px;background:#383838;border-radius:4px"></div>
<svg class="a" style="left:1797px;top:484px" width="10" height="8"><path d="M1 2L5 6L9 2" fill="none" stroke="#ccc" stroke-width="1.3"/></svg>
<div class="t" style="left:1813px;top:481px">Transform</div>
<svg class="a" style="left:1894px;top:485px" width="12" height="6"><g fill="#8a8a8a"><rect x="0" y="0" width="1.5" height="1.5"/><rect x="3" y="0" width="1.5" height="1.5"/><rect x="6" y="0" width="1.5" height="1.5"/><rect x="9" y="0" width="1.5" height="1.5"/><rect x="0" y="3" width="1.5" height="1.5"/><rect x="3" y="3" width="1.5" height="1.5"/><rect x="6" y="3" width="1.5" height="1.5"/><rect x="9" y="3" width="1.5" height="1.5"/></g></svg>
<div class="t" style="left:1790px;top:511px;width:38px;text-align:right">Loc...</div>
<div class="a" style="left:1838px;top:509px;width:29px;height:18px;background:#545454;border-radius:3px"></div>
<div class="t" style="left:1838px;top:511px;width:29px;text-align:center">0</div>
<svg class="a" style="left:1870px;top:512px" width="14" height="12"><path d="M2 5V3.5A2.5 2.5 0 0 1 7 3.5" fill="none" stroke="#ccc" stroke-width="1.2"/><rect x="4.5" y="5.5" width="8" height="6" fill="none" stroke="#ccc" stroke-width="1.2"/><rect x="8" y="8" width="1.3" height="1.5" fill="#ccc"/></svg>
<div class="a" style="left:1892px;top:516px;width:4px;height:4px;border-radius:2px;background:#ddd"></div>
<div class="t" style="left:1790px;top:531px;width:38px;text-align:right">Y</div>
<div class="a" style="left:1838px;top:529px;width:29px;height:18px;background:#545454;border-radius:3px"></div>
<div class="t" style="left:1838px;top:531px;width:29px;text-align:center">0</div>
<svg class="a" style="left:1870px;top:532px" width="14" height="12"><path d="M2 5V3.5A2.5 2.5 0 0 1 7 3.5" fill="none" stroke="#ccc" stroke-width="1.2"/><rect x="4.5" y="5.5" width="8" height="6" fill="none" stroke="#ccc" stroke-width="1.2"/><rect x="8" y="8" width="1.3" height="1.5" fill="#ccc"/></svg>
<div class="a" style="left:1892px;top:536px;width:4px;height:4px;border-radius:2px;background:#ddd"></div>
<div class="t" style="left:1790px;top:551px;width:38px;text-align:right">Z</div>
<div class="a" style="left:1838px;top:549px;width:29px;height:18px;background:#545454;border-radius:3px"></div>
<div class="t" style="left:1838px;top:551px;width:29px;text-align:center">0</div>
<svg class="a" style="left:1870px;top:552px" width="14" height="12"><path d="M2 5V3.5A2.5 2.5 0 0 1 7 3.5" fill="none" stroke="#ccc" stroke-width="1.2"/><rect x="4.5" y="5.5" width="8" height="6" fill="none" stroke="#ccc" stroke-width="1.2"/><rect x="8" y="8" width="1.3" height="1.5" fill="#ccc"/></svg>
<div class="a" style="left:1892px;top:556px;width:4px;height:4px;border-radius:2px;background:#ddd"></div>
<div class="t" style="left:1790px;top:576px;width:38px;text-align:right">Rot...</div>
<div class="a" style="left:1838px;top:574px;width:29px;height:18px;background:#545454;border-radius:3px"></div>
<div class="t" style="left:1838px;top:576px;width:29px;text-align:center">0</div>
<svg class="a" style="left:1870px;top:577px" width="14" height="12"><path d="M2 5V3.5A2.5 2.5 0 0 1 7 3.5" fill="none" stroke="#ccc" stroke-width="1.2"/><rect x="4.5" y="5.5" width="8" height="6" fill="none" stroke="#ccc" stroke-width="1.2"/><rect x="8" y="8" width="1.3" height="1.5" fill="#ccc"/></svg>
<div class="a" style="left:1892px;top:581px;width:4px;height:4px;border-radius:2px;background:#ddd"></div>
<div class="t" style="left:1790px;top:596px;width:38px;text-align:right">Y</div>
<div class="a" style="left:1838px;top:594px;width:29px;height:18px;background:#545454;border-radius:3px"></div>
<div class="t" style="left:1838px;top:596px;width:29px;text-align:center">0</div>
<svg class="a" style="left:1870px;top:597px" width="14" height="12"><path d="M2 5V3.5A2.5 2.5 0 0 1 7 3.5" fill="none" stroke="#ccc" stroke-width="1.2"/><rect x="4.5" y="5.5" width="8" height="6" fill="none" stroke="#ccc" stroke-width="1.2"/><rect x="8" y="8" width="1.3" height="1.5" fill="#ccc"/></svg>
<div class="a" style="left:1892px;top:601px;width:4px;height:4px;border-radius:2px;background:#ddd"></div>
<div class="t" style="left:1790px;top:616px;width:38px;text-align:right">Z</div>
<div class="a" style="left:1838px;top:614px;width:29px;height:18px;background:#545454;border-radius:3px"></div>
<div class="t" style="left:1838px;top:616px;width:29px;text-align:center">0</div>
<svg class="a" style="left:1870px;top:617px" width="14" height="12"><path d="M2 5V3.5A2.5 2.5 0 0 1 7 3.5" fill="none" stroke="#ccc" stroke-width="1.2"/><rect x="4.5" y="5.5" width="8" height="6" fill="none" stroke="#ccc" stroke-width="1.2"/><rect x="8" y="8" width="1.3" height="1.5" fill="#ccc"/></svg>
<div class="a" style="left:1892px;top:621px;width:4px;height:4px;border-radius:2px;background:#ddd"></div>
<div class="t" style="left:1790px;top:666px;width:38px;text-align:right">Sca...</div>
<div class="a" style="left:1838px;top:664px;width:29px;height:18px;background:#545454;border-radius:3px"></div>
<div class="t" style="left:1838px;top:666px;width:29px;text-align:center">1</div>
<svg class="a" style="left:1870px;top:667px" width="14" height="12"><path d="M2 5V3.5A2.5 2.5 0 0 1 7 3.5" fill="none" stroke="#ccc" stroke-width="1.2"/><rect x="4.5" y="5.5" width="8" height="6" fill="none" stroke="#ccc" stroke-width="1.2"/><rect x="8" y="8" width="1.3" height="1.5" fill="#ccc"/></svg>
<div class="a" style="left:1892px;top:671px;width:4px;height:4px;border-radius:2px;background:#ddd"></div>
<div class="t" style="left:1790px;top:686px;width:38px;text-align:right">Y</div>
<div class="a" style="left:1838px;top:684px;width:29px;height:18px;background:#545454;border-radius:3px"></div>
<div class="t" style="left:1838px;top:686px;width:29px;text-align:center">1</div>
<svg class="a" style="left:1870px;top:687px" width="14" height="12"><path d="M2 5V3.5A2.5 2.5 0 0 1 7 3.5" fill="none" stroke="#ccc" stroke-width="1.2"/><rect x="4.5" y="5.5" width="8" height="6" fill="none" stroke="#ccc" stroke-width="1.2"/><rect x="8" y="8" width="1.3" height="1.5" fill="#ccc"/></svg>
<div class="a" style="left:1892px;top:691px;width:4px;height:4px;border-radius:2px;background:#ddd"></div>
<div class="t" style="left:1790px;top:706px;width:38px;text-align:right">Z</div>
<div class="a" style="left:1838px;top:704px;width:29px;height:18px;background:#545454;border-radius:3px"></div>
<div class="t" style="left:1838px;top:706px;width:29px;text-align:center">1</div>
<svg class="a" style="left:1870px;top:707px" width="14" height="12"><path d="M2 5V3.5A2.5 2.5 0 0 1 7 3.5" fill="none" stroke="#ccc" stroke-width="1.2"/><rect x="4.5" y="5.5" width="8" height="6" fill="none" stroke="#ccc" stroke-width="1.2"/><rect x="8" y="8" width="1.3" height="1.5" fill="#ccc"/></svg>
<div class="a" style="left:1892px;top:711px;width:4px;height:4px;border-radius:2px;background:#ddd"></div>
<div class="t" style="left:1790px;top:641px;width:38px;text-align:right">Mode</div>
<div class="a" style="left:1838px;top:639px;width:29px;height:18px;background:#282828;border-radius:3px"></div>
<div class="t" style="left:1843px;top:642px">X</div>
<svg class="a" style="left:1855px;top:646px" width="10" height="8"><path d="M1 2L5 6L9 2" fill="none" stroke="#ddd" stroke-width="1.3"/></svg>
<div class="a" style="left:1892px;top:646px;width:4px;height:4px;border-radius:2px;background:#ddd"></div>
<svg class="a" style="left:1812px;top:740px" width="8" height="10"><path d="M2 1L6 5L2 9" fill="none" stroke="#ccc" stroke-width="1.3"/></svg>
<div class="t" style="left:1826px;top:737px">Delta Transform</div>
<div class="a" style="left:1790px;top:759px;width:122px;height:25px;background:#383838;border-radius:4px"></div>
<svg class="a" style="left:1894px;top:769px" width="12" height="6"><g fill="#8a8a8a"><rect x="0" y="0" width="1.5" height="1.5"/><rect x="3" y="0" width="1.5" height="1.5"/><rect x="6" y="0" width="1.5" height="1.5"/><rect x="9" y="0" width="1.5" height="1.5"/><rect x="0" y="3" width="1.5" height="1.5"/><rect x="3" y="3" width="1.5" height="1.5"/><rect x="6" y="3" width="1.5" height="1.5"/><rect x="9" y="3" width="1.5" height="1.5"/></g></svg>
<svg class="a" style="left:1800px;top:766px" width="8" height="10"><path d="M2 1L6 5L2 9" fill="none" stroke="#ccc" stroke-width="1.3"/></svg>
<div class="t" style="left:1812px;top:764px">Relations</div>
<div class="a" style="left:1790px;top:786px;width:122px;height:25px;background:#383838;border-radius:4px"></div>
<svg class="a" style="left:1894px;top:796px" width="12" height="6"><g fill="#8a8a8a"><rect x="0" y="0" width="1.5" height="1.5"/><rect x="3" y="0" width="1.5" height="1.5"/><rect x="6" y="0" width="1.5" height="1.5"/><rect x="9" y="0" width="1.5" height="1.5"/><rect x="0" y="3" width="1.5" height="1.5"/><rect x="3" y="3" width="1.5" height="1.5"/><rect x="6" y="3" width="1.5" height="1.5"/><rect x="9" y="3" width="1.5" height="1.5"/></g></svg>
<svg class="a" style="left:1800px;top:793px" width="8" height="10"><path d="M2 1L6 5L2 9" fill="none" stroke="#ccc" stroke-width="1.3"/></svg>
<div class="t" style="left:1812px;top:791px">Collections</div>
<div class="a" style="left:1790px;top:813px;width:122px;height:25px;background:#383838;border-radius:4px"></div>
<svg class="a" style="left:1894px;top:823px" width="12" height="6"><g fill="#8a8a8a"><rect x="0" y="0" width="1.5" height="1.5"/><rect x="3" y="0" width="1.5" height="1.5"/><rect x="6" y="0" width="1.5" height="1.5"/><rect x="9" y="0" width="1.5" height="1.5"/><rect x="0" y="3" width="1.5" height="1.5"/><rect x="3" y="3" width="1.5" height="1.5"/><rect x="6" y="3" width="1.5" height="1.5"/><rect x="9" y="3" width="1.5" height="1.5"/></g></svg>
<svg class="a" style="left:1800px;top:820px" width="8" height="10"><path d="M2 1L6 5L2 9" fill="none" stroke="#ccc" stroke-width="1.3"/></svg>
<div class="t" style="left:1812px;top:818px">Instancing</div>
<div class="a" style="left:1790px;top:840px;width:122px;height:25px;background:#383838;border-radius:4px"></div>
<svg class="a" style="left:1894px;top:850px" width="12" height="6"><g fill="#8a8a8a"><rect x="0" y="0" width="1.5" height="1.5"/><rect x="3" y="0" width="1.5" height="1.5"/><rect x="6" y="0" width="1.5" height="1.5"/><rect x="9" y="0" width="1.5" height="1.5"/><rect x="0" y="3" width="1.5" height="1.5"/><rect x="3" y="3" width="1.5" height="1.5"/><rect x="6" y="3" width="1.5" height="1.5"/><rect x="9" y="3" width="1.5" height="1.5"/></g></svg>
<svg class="a" style="left:1800px;top:847px" width="8" height="10"><path d="M2 1L6 5L2 9" fill="none" stroke="#ccc" stroke-width="1.3"/></svg>
<div class="t" style="left:1812px;top:845px">Motion Paths</div>
<div class="a" style="left:1790px;top:867px;width:122px;height:25px;background:#383838;border-radius:4px"></div>
<svg class="a" style="left:1894px;top:877px" width="12" height="6"><g fill="#8a8a8a"><rect x="0" y="0" width="1.5" height="1.5"/><rect x="3" y="0" width="1.5" height="1.5"/><rect x="6" y="0" width="1.5" height="1.5"/><rect x="9" y="0" width="1.5" height="1.5"/><rect x="0" y="3" width="1.5" height="1.5"/><rect x="3" y="3" width="1.5" height="1.5"/><rect x="6" y="3" width="1.5" height="1.5"/><rect x="9" y="3" width="1.5" height="1.5"/></g></svg>
<svg class="a" style="left:1800px;top:874px" width="8" height="10"><path d="M2 1L6 5L2 9" fill="none" stroke="#ccc" stroke-width="1.3"/></svg>
<div class="t" style="left:1812px;top:872px">Visibility</div>
<div class="a" style="left:1790px;top:894px;width:122px;height:25px;background:#383838;border-radius:4px"></div>
<svg class="a" style="left:1894px;top:904px" width="12" height="6"><g fill="#8a8a8a"><rect x="0" y="0" width="1.5" height="1.5"/><rect x="3" y="0" width="1.5" height="1.5"/><rect x="6" y="0" width="1.5" height="1.5"/><rect x="9" y="0" width="1.5" height="1.5"/><rect x="0" y="3" width="1.5" height="1.5"/><rect x="3" y="3" width="1.5" height="1.5"/><rect x="6" y="3" width="1.5" height="1.5"/><rect x="9" y="3" width="1.5" height="1.5"/></g></svg>
<svg class="a" style="left:1800px;top:901px" width="8" height="10"><path d="M2 1L6 5L2 9" fill="none" stroke="#ccc" stroke-width="1.3"/></svg>
<div class="t" style="left:1812px;top:899px">Viewport Display</div>
<div class="a" style="left:1790px;top:921px;width:122px;height:25px;background:#383838;border-radius:4px"></div>
<svg class="a" style="left:1894px;top:931px" width="12" height="6"><g fill="#8a8a8a"><rect x="0" y="0" width="1.5" height="1.5"/><rect x="3" y="0" width="1.5" height="1.5"/><rect x="6" y="0" width="1.5" height="1.5"/><rect x="9" y="0" width="1.5" height="1.5"/><rect x="0" y="3" width="1.5" height="1.5"/><rect x="3" y="3" width="1.5" height="1.5"/><rect x="6" y="3" width="1.5" height="1.5"/><rect x="9" y="3" width="1.5" height="1.5"/></g></svg>
<svg class="a" style="left:1800px;top:928px" width="8" height="10"><path d="M2 1L6 5L2 9" fill="none" stroke="#ccc" stroke-width="1.3"/></svg>
<div class="t" style="left:1812px;top:926px">Line Art</div>
<div class="a" style="left:1790px;top:948px;width:122px;height:25px;background:#383838;border-radius:4px"></div>
<svg class="a" style="left:1894px;top:958px" width="12" height="6"><g fill="#8a8a8a"><rect x="0" y="0" width="1.5" height="1.5"/><rect x="3" y="0" width="1.5" height="1.5"/><rect x="6" y="0" width="1.5" height="1.5"/><rect x="9" y="0" width="1.5" height="1.5"/><rect x="0" y="3" width="1.5" height="1.5"/><rect x="3" y="3" width="1.5" height="1.5"/><rect x="6" y="3" width="1.5" height="1.5"/><rect x="9" y="3" width="1.5" height="1.5"/></g></svg>
<svg class="a" style="left:1800px;top:955px" width="8" height="10"><path d="M2 1L6 5L2 9" fill="none" stroke="#ccc" stroke-width="1.3"/></svg>
<div class="t" style="left:1812px;top:953px">Custom Properties</div>
<div class="t" style="left:1848px;top:1032px;color:#9a9a9a;font-size:11px">4.2.0 Alpha</div>
<!-- render window -->
<div class="a" id="rw" style="left:49px;top:87px;width:1440px;height:786px;box-shadow:0 2px 14px 2px rgba(0,0,0,.6);border-radius:6px 6px 0 0">
  <div class="a" style="left:0;top:0;width:1440px;height:37px;background:#deddda;border-radius:6px 6px 0 0;border-top:1px solid #f4f3f1"></div>
  <div class="t" style="left:667px;top:10px;font-size:14px;line-height:16px;font-weight:bold;color:#2e3436">Blender Render</div>
  <div class="a" style="left:1350px;top:20px;width:8px;height:2px;background:#1e2426"></div>
  <div class="a" style="left:1384px;top:14px;width:8px;height:8px;border:2px solid #1e2426"></div>
  <svg class="a" style="left:1417px;top:13px" width="10" height="10"><path d="M1 1L9 9M9 1L1 9" stroke="#1e2426" stroke-width="2.2"/></svg>
  <div class="a" style="left:0;top:37px;width:960px;height:262px;background:#000"></div>
</div>
<!-- image editor (extends beyond window) -->
<div class="a" id="ie" style="left:49px;top:386px;width:960px;height:656px;background:#3b3b3b;overflow:hidden">
  <svg class="a" style="left:0;top:0" width="960" height="656" viewBox="49 386 960 656">
    <defs>
      <linearGradient id="gtop" x1="420" y1="0" x2="1009" y2="0" gradientUnits="userSpaceOnUse"><stop offset="0" stop-color="#8c8c8c"/><stop offset="1" stop-color="#a8a8a8"/></linearGradient>
      <linearGradient id="gright" x1="0" y1="600" x2="0" y2="1042" gradientUnits="userSpaceOnUse"><stop offset="0" stop-color="#939393"/><stop offset="1" stop-color="#787878"/></linearGradient>
    </defs>
    <polygon points="420,534 755,682 755,1042 583,1042 446,959" fill="#343434"/>
    <polygon points="755,682 1009,584 1009,1013 955,1042 755,1042" fill="url(#gright)"/>
    <polygon points="420,534 776,423 1009,505 1009,584 755,682" fill="url(#gtop)" stroke="url(#gtop)" stroke-width="0.6"/>
  </svg>
  <div class="a" style="left:0;top:0;width:960px;height:46px;background:rgba(40,40,40,.45)"></div>
  <div class="a hb" style="left:9px;top:4px;width:30px;height:18px;background:#282828"></div>
  <div class="a hb" style="left:45px;top:4px;width:67px;height:18px;background:#282828"></div>
  <div class="t" style="left:71px;top:6px">View</div>
  <div class="t" style="left:125px;top:6px">View</div>
  <div class="t" style="left:166px;top:6px">Image</div>
  <div class="a hb" style="left:610px;top:4px;width:198px;height:18px;background:#3d3d3d"></div>
  <div class="a" style="left:611px;top:5px;width:29px;height:16px;background:#282828"></div>
  <div class="a" style="left:640px;top:5px;width:88px;height:16px;background:#1d1d1d"></div>
  <div class="t" style="left:648px;top:6px">Render Result</div>
  <div class="t" style="left:12px;top:30px;color:#fff;font-weight:bold;font-size:11.6px;text-shadow:0 0 2px #000">Frame:1 | Time:00:00.61 | Mem:52.39M (Peak 84.82M)</div>
  <svg class="a" style="left:0;top:40px" width="10" height="14"><path d="M2 3L6 7L2 11" fill="none" stroke="#888" stroke-width="1.2"/></svg>
</div>
<!-- stale viewport inside render window -->
<div class="a" style="left:1009px;top:124px;width:480px;height:749px;background:rgba(0,0,0,.05)"></div>
<div class="a" style="left:49px;top:873px;width:960px;height:9px;background:linear-gradient(rgba(0,0,0,.28),rgba(0,0,0,0))"></div>
<!-- image editor header icons -->
<svg class="a" style="left:49px;top:386px" width="820" height="26" viewBox="49 386 820 26">
 <g fill="none" stroke="#e0e0e0" stroke-width="1.2">
  <path d="M63 393V405.5H75.5V394"/>
  <path d="M80 398L83 401L86 398"/>
  <path d="M100 392.5H113V405.5H108M100 392.5V405.5"/>
  <path d="M152.5 398L155.5 401L158.5 398"/>
  <path d="M663.5 392.5H676.5V405.5H672M663.5 392.5V405.5"/>
  <path d="M680 398L683 401L686 398"/>
  <path d="M787.5 392.5Q784 394 781.5 393.5V398Q782 403 787.5 405.5Q793 403 793.5 398V393.5Q791 394 787.5 392.5Z" stroke="#aaa"/>
  <path d="M801.5 395.5H806.5V405H801.5ZM804 395.5V392.5H811.5L814.5 395.5V402.5H806.5"/>
  <path d="M844.5 393.5L852.5 401.5M852.5 393.5L844.5 401.5" stroke="#ccc"/>
 </g>
 <g fill="#e0e0e0">
  <path d="M66.5 391.5H75.5V396H72.5V401H69V396H66.5Z"/>
  <path d="M100.5 405.5L105 398L109.5 405.5Z"/><circle cx="110" cy="395.5" r="1.3"/>
  <path d="M664 405.5L668.5 398L673 405.5Z"/><circle cx="673.5" cy="395.5" r="1.3"/>
  <path d="M820.5 395V393H826L827.5 394.5H835.5V396ZM820.5 397H835.5V405H820.5Z"/>
 </g>
 <g fill="#2a2a2a"><rect x="797" y="391" width="1" height="16"/><rect x="817" y="391" width="1" height="16"/><rect x="837" y="391" width="1" height="16"/></g>
</svg>
<svg class="a" style="left:915px;top:238px" width="24" height="30" viewBox="915 238 24 30"><path d="M920.5 243.2V260.2L924 256.6L927 262.3Q928 263.5 929.3 262.7Q930 262 929.6 260.8L927.2 254.8H932Z" fill="#000" stroke="#fff" stroke-width="1.1" stroke-linejoin="round"/></svg>
</body></html>
